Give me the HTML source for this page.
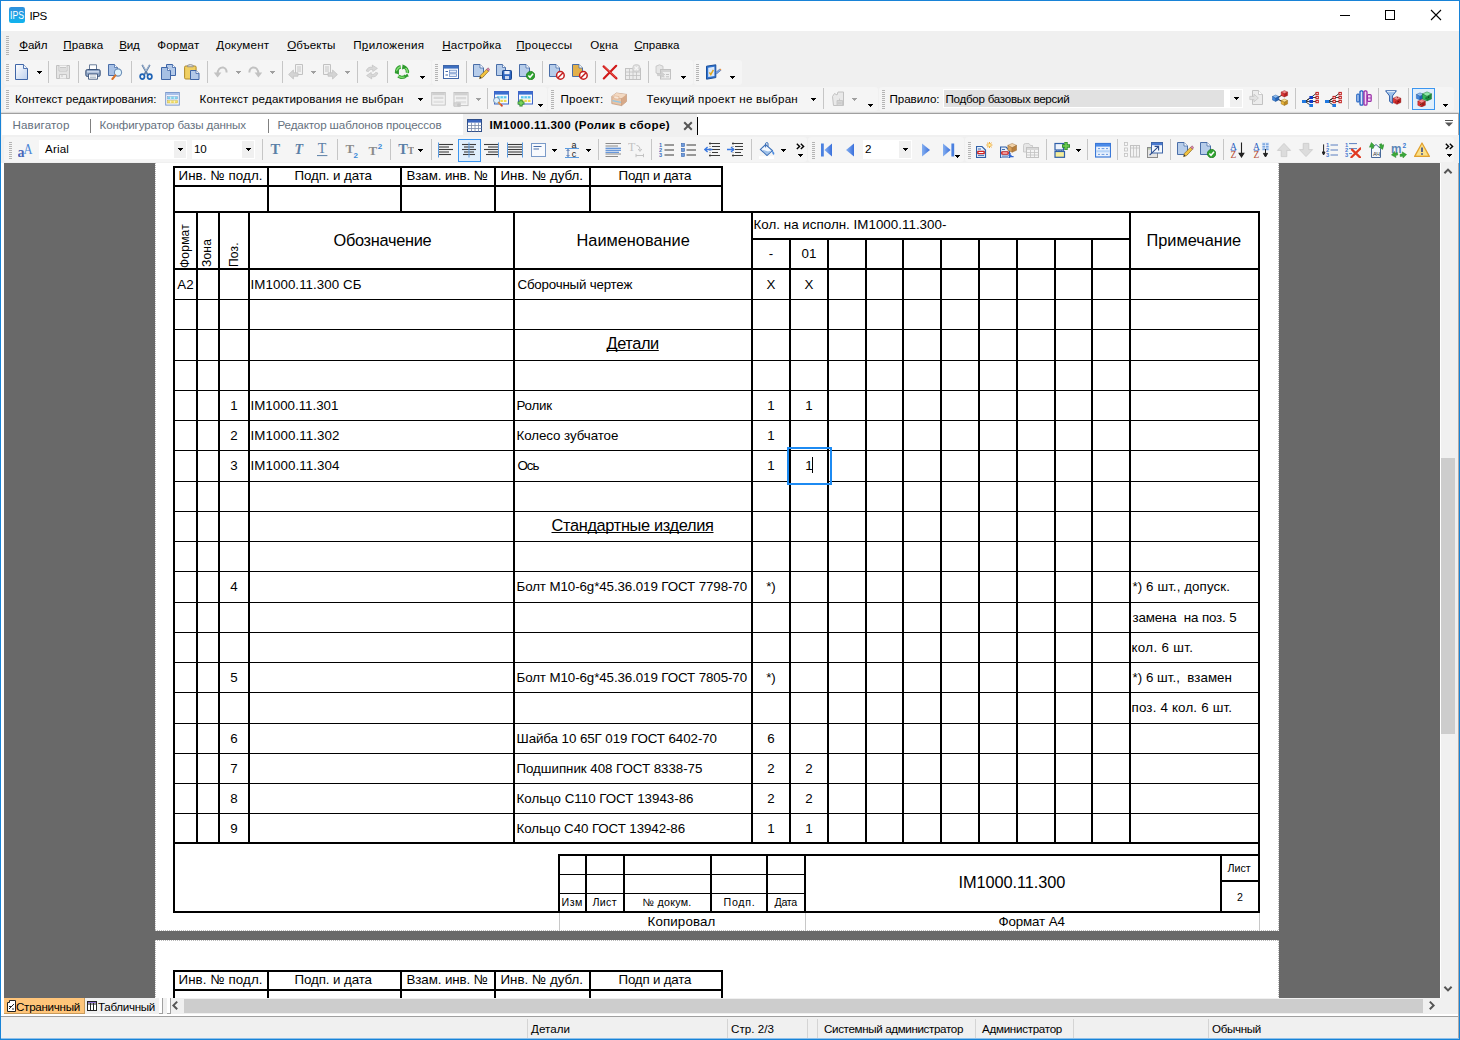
<!DOCTYPE html>
<html><head><meta charset="utf-8"><title>IPS</title><style>
html,body{margin:0;padding:0}
body{width:1460px;height:1040px;position:relative;overflow:hidden;background:#f0f0f0;
font-family:"Liberation Sans",sans-serif;}
#r{position:absolute;left:0;top:0;width:1460px;height:1040px;overflow:hidden}
#r div,#r svg,#r span{position:absolute}
.t{white-space:nowrap;line-height:20px}
</style></head><body><div id="r">
<div style="left:0px;top:0px;width:1460px;height:31px;background:#fff;"></div>
<div style="left:1px;top:163px;width:3px;height:853px;background:#fff;"></div>
<div style="left:4px;top:163px;width:1436px;height:835px;background:#696969;"></div>
<div style="left:155px;top:163px;width:1124px;height:768px;background:#fff;"></div>
<div style="left:155px;top:940px;width:1124px;height:58px;background:#fff;"></div>
<div style="left:155px;top:163px;width:1px;height:768px;background:repeating-linear-gradient(180deg,#b9b9b9 0 1px,#fff 1px 2px);"></div>
<div style="left:1278px;top:163px;width:1px;height:768px;background:repeating-linear-gradient(180deg,#b9b9b9 0 1px,#fff 1px 2px);"></div>
<div style="left:155px;top:930px;width:1124px;height:1px;background:repeating-linear-gradient(90deg,#b9b9b9 0 1px,#fff 1px 2px);"></div>
<div style="left:155px;top:940px;width:1124px;height:1px;background:repeating-linear-gradient(90deg,#b9b9b9 0 1px,#fff 1px 2px);"></div>
<div style="left:155px;top:940px;width:1px;height:58px;background:repeating-linear-gradient(180deg,#b9b9b9 0 1px,#fff 1px 2px);"></div>
<div style="left:1278px;top:940px;width:1px;height:58px;background:repeating-linear-gradient(180deg,#b9b9b9 0 1px,#fff 1px 2px);"></div>
<div style="left:1px;top:112px;width:1458px;height:1px;background:#dadada;"></div>
<div style="left:1px;top:113px;width:1458px;height:1px;background:#a0a0a0;"></div>
<div style="left:2px;top:114px;width:1456px;height:21px;background:#fff;"></div>
<div style="left:1440px;top:163px;width:1px;height:835px;background:#fff;"></div>
<div style="left:1441px;top:163px;width:17px;height:835px;background:#f0f0f0;"></div>
<div style="left:1441px;top:458px;width:14px;height:276px;background:#cdcdcd;"></div>
<svg style="left:1443px;top:167px" width="10" height="8" viewBox="0 0 10 8"><path d="M1.4 6.2 L5 2.6 L8.6 6.2" fill="none" stroke="#555" stroke-width="2"/></svg>
<svg style="left:1443px;top:985px" width="10" height="8" viewBox="0 0 10 8"><path d="M1.4 1.8 L5 5.4 L8.6 1.8" fill="none" stroke="#555" stroke-width="2"/></svg>
<div style="left:4px;top:998px;width:1454px;height:16px;background:#f0f0f0;"></div>
<div style="left:4px;top:1014px;width:1454px;height:2px;background:#fff;"></div>
<div style="left:1px;top:1016px;width:1458px;height:1px;background:#a0a0a0;"></div>
<div style="left:4px;top:998px;width:81px;height:16px;background:#ffc57a;box-shadow:inset -1px -1px 0 #c89b5c"></div>
<svg style="left:7px;top:1000px" width="9" height="12" viewBox="0 0 9 12"><path d="M.5 2.5 H2.5 V.5 H8.5 V11.5 H.5Z" fill="#fff" stroke="#222" stroke-width="1"/><path d="M2 9 L7 4 M2 6.5 H4.5 M5 9 H7" stroke="#222" stroke-width="1" fill="none"/></svg>
<svg style="left:87px;top:1001px" width="10" height="10" viewBox="0 0 10 10"><rect x=".5" y=".5" width="9" height="9" fill="#fff" stroke="#222"/><path d="M.5 3 H9.5 M3.5 .5 V9.5 M6.5 .5 V9.5" stroke="#222" fill="none"/><path d="M1 1.5 H9" stroke="#8a6fd0" stroke-width="1"/></svg>
<span id="t1" class="t" style="left:16px;top:997px;font-size:11.6px;color:#000;letter-spacing:-0.272px;">Страничный</span>
<span id="t2" class="t" style="left:98px;top:997px;font-size:11.6px;color:#000;letter-spacing:-0.292px;">Табличный</span>
<div style="left:159px;top:998px;width:3px;height:16px;background:#fff;"></div>
<div style="left:162px;top:998px;width:1px;height:16px;background:#a0a0a0;"></div>
<div style="left:159px;top:1013px;width:4px;height:1px;background:#a0a0a0;"></div>
<div style="left:167px;top:998px;width:3px;height:16px;background:#fff;"></div>
<div style="left:170px;top:998px;width:1px;height:16px;background:#a0a0a0;"></div>
<div style="left:167px;top:1013px;width:4px;height:1px;background:#a0a0a0;"></div>
<div style="left:184px;top:999px;width:1239px;height:14px;background:#cdcdcd;"></div>
<svg style="left:171px;top:1000px" width="8" height="11" viewBox="0 0 8 11"><path d="M6.2 1.6 L2.4 5.4 L6.2 9.2" fill="none" stroke="#555" stroke-width="2"/></svg>
<svg style="left:1428px;top:1000px" width="8" height="11" viewBox="0 0 8 11"><path d="M1.8 1.6 L5.6 5.4 L1.8 9.2" fill="none" stroke="#555" stroke-width="2"/></svg>
<div style="left:1px;top:1017px;width:1458px;height:22px;background:#f0f0f0;"></div>
<div style="left:527px;top:1019px;width:1px;height:19px;background:#d4d4d4;"></div>
<div style="left:727px;top:1019px;width:1px;height:19px;background:#d4d4d4;"></div>
<div style="left:807px;top:1019px;width:1px;height:19px;background:#d4d4d4;"></div>
<div style="left:817px;top:1019px;width:1px;height:19px;background:#d4d4d4;"></div>
<div style="left:975px;top:1019px;width:1px;height:19px;background:#d4d4d4;"></div>
<div style="left:1073px;top:1019px;width:1px;height:19px;background:#d4d4d4;"></div>
<div style="left:1208px;top:1019px;width:1px;height:19px;background:#d4d4d4;"></div>
<span id="t3" class="t" style="left:531px;top:1019px;font-size:11.6px;color:#000;letter-spacing:0.034px;">Детали</span>
<span id="t4" class="t" style="left:731px;top:1019px;font-size:11.6px;color:#000;letter-spacing:0.037px;">Стр. 2/3</span>
<span id="t5" class="t" style="left:824px;top:1019px;font-size:11.6px;color:#000;letter-spacing:-0.350px;">Системный администратор</span>
<span id="t6" class="t" style="left:982px;top:1019px;font-size:11.6px;color:#000;letter-spacing:-0.281px;">Администратор</span>
<span id="t7" class="t" style="left:1212px;top:1019px;font-size:11.6px;color:#000;letter-spacing:-0.321px;">Обычный</span>
<svg style="left:9px;top:7px" width="16" height="16" viewBox="0 0 16 16"><defs><linearGradient id="ipsg" x1="0" y1="0" x2="0" y2="1"><stop offset="0" stop-color="#2f8fdc"/><stop offset="1" stop-color="#10b4ee"/></linearGradient></defs><rect width="16" height="16" rx="2.2" fill="url(#ipsg)"/><text x="8" y="12" font-family="Liberation Sans" font-size="10.5" fill="#fff" text-anchor="middle" textLength="14" lengthAdjust="spacingAndGlyphs">IPS</text></svg>
<span id="t8" class="t" style="left:29.5px;top:6px;font-size:11.6px;color:#000;letter-spacing:-0.429px;">IPS</span>
<div style="left:1340px;top:15px;width:10px;height:1px;background:#000;"></div>
<div style="left:1385px;top:10px;width:10px;height:10px;background:transparent;box-sizing:border-box;border:1px solid #000"></div>
<svg style="left:1430px;top:9px" width="12" height="12" viewBox="0 0 12 12"><path d="M1 1 L11 11 M11 1 L1 11" stroke="#000" stroke-width="1.1" fill="none"/></svg>
<div style="left:0px;top:0px;width:1460px;height:1px;background:#1883d7;"></div>
<div style="left:0px;top:0px;width:1px;height:1040px;background:#1883d7;"></div>
<div style="left:1459px;top:0px;width:1px;height:1040px;background:#1883d7;"></div>
<div style="left:0px;top:1039px;width:1460px;height:1px;background:#1883d7;"></div>
<div style="left:1458px;top:113px;width:1px;height:926px;background:#b3aaa6;"></div>
<div style="left:1px;top:1038px;width:1458px;height:1px;background:#8fc0ea;"></div>
<div style="left:173px;top:166px;width:550px;height:2px;background:#000;"></div>
<div style="left:173px;top:185px;width:550px;height:2px;background:#000;"></div>
<div style="left:173px;top:211px;width:550px;height:2px;background:#000;"></div>
<div style="left:173px;top:166px;width:2px;height:47px;background:#000;"></div>
<div style="left:267px;top:166px;width:2px;height:47px;background:#000;"></div>
<div style="left:400px;top:166px;width:2px;height:47px;background:#000;"></div>
<div style="left:494px;top:166px;width:2px;height:47px;background:#000;"></div>
<div style="left:589px;top:166px;width:2px;height:47px;background:#000;"></div>
<div style="left:721px;top:166px;width:2px;height:47px;background:#000;"></div>
<span id="t9" class="t" style="left:178.5px;top:166px;font-size:13.33px;color:#000;letter-spacing:0.091px;">Инв. № подл.</span>
<span id="t10" class="t" style="left:294.5px;top:166px;font-size:13.33px;color:#000;letter-spacing:-0.091px;">Подп. и дата</span>
<span id="t11" class="t" style="left:406.5px;top:166px;font-size:13.33px;color:#000;letter-spacing:-0.091px;">Взам. инв. №</span>
<span id="t12" class="t" style="left:500.5px;top:166px;font-size:13.33px;color:#000;">Инв. № дубл.</span>
<span id="t13" class="t" style="left:618.5px;top:166px;font-size:13.33px;color:#000;letter-spacing:-0.200px;">Подп и дата</span>
<div style="left:173px;top:970px;width:550px;height:2px;background:#000;"></div>
<div style="left:173px;top:989px;width:550px;height:2px;background:#000;"></div>
<div style="left:173px;top:970px;width:2px;height:28px;background:#000;"></div>
<div style="left:267px;top:970px;width:2px;height:28px;background:#000;"></div>
<div style="left:400px;top:970px;width:2px;height:28px;background:#000;"></div>
<div style="left:494px;top:970px;width:2px;height:28px;background:#000;"></div>
<div style="left:589px;top:970px;width:2px;height:28px;background:#000;"></div>
<div style="left:721px;top:970px;width:2px;height:28px;background:#000;"></div>
<span id="t14" class="t" style="left:178.5px;top:970px;font-size:13.33px;color:#000;letter-spacing:0.091px;">Инв. № подл.</span>
<span id="t15" class="t" style="left:294.5px;top:970px;font-size:13.33px;color:#000;letter-spacing:-0.091px;">Подп. и дата</span>
<span id="t16" class="t" style="left:406.5px;top:970px;font-size:13.33px;color:#000;letter-spacing:-0.091px;">Взам. инв. №</span>
<span id="t17" class="t" style="left:500.5px;top:970px;font-size:13.33px;color:#000;">Инв. № дубл.</span>
<span id="t18" class="t" style="left:618.5px;top:970px;font-size:13.33px;color:#000;letter-spacing:-0.200px;">Подп и дата</span>
<div style="left:173px;top:211px;width:1087px;height:2px;background:#000;"></div>
<div style="left:173px;top:268px;width:1087px;height:2px;background:#000;"></div>
<div style="left:173px;top:842px;width:1087px;height:2px;background:#000;"></div>
<div style="left:751px;top:238px;width:380px;height:2px;background:#000;"></div>
<div style="left:173px;top:299px;width:1087px;height:1px;background:#000;"></div>
<div style="left:173px;top:329px;width:1087px;height:1px;background:#000;"></div>
<div style="left:173px;top:360px;width:1087px;height:1px;background:#000;"></div>
<div style="left:173px;top:390px;width:1087px;height:1px;background:#000;"></div>
<div style="left:173px;top:420px;width:1087px;height:1px;background:#000;"></div>
<div style="left:173px;top:450px;width:1087px;height:1px;background:#000;"></div>
<div style="left:173px;top:481px;width:1087px;height:1px;background:#000;"></div>
<div style="left:173px;top:511px;width:1087px;height:1px;background:#000;"></div>
<div style="left:173px;top:541px;width:1087px;height:1px;background:#000;"></div>
<div style="left:173px;top:571px;width:1087px;height:1px;background:#000;"></div>
<div style="left:173px;top:602px;width:1087px;height:1px;background:#000;"></div>
<div style="left:173px;top:632px;width:1087px;height:1px;background:#000;"></div>
<div style="left:173px;top:662px;width:1087px;height:1px;background:#000;"></div>
<div style="left:173px;top:692px;width:1087px;height:1px;background:#000;"></div>
<div style="left:173px;top:723px;width:1087px;height:1px;background:#000;"></div>
<div style="left:173px;top:753px;width:1087px;height:1px;background:#000;"></div>
<div style="left:173px;top:783px;width:1087px;height:1px;background:#000;"></div>
<div style="left:173px;top:813px;width:1087px;height:1px;background:#000;"></div>
<div style="left:173px;top:211px;width:2px;height:633px;background:#000;"></div>
<div style="left:196px;top:211px;width:2px;height:633px;background:#000;"></div>
<div style="left:218px;top:211px;width:2px;height:633px;background:#000;"></div>
<div style="left:248px;top:211px;width:2px;height:633px;background:#000;"></div>
<div style="left:513px;top:211px;width:2px;height:633px;background:#000;"></div>
<div style="left:751px;top:211px;width:2px;height:633px;background:#000;"></div>
<div style="left:1129px;top:211px;width:2px;height:633px;background:#000;"></div>
<div style="left:1258px;top:211px;width:2px;height:633px;background:#000;"></div>
<div style="left:789px;top:238px;width:2px;height:606px;background:#000;"></div>
<div style="left:827px;top:238px;width:2px;height:606px;background:#000;"></div>
<div style="left:865px;top:238px;width:2px;height:606px;background:#000;"></div>
<div style="left:902px;top:238px;width:2px;height:606px;background:#000;"></div>
<div style="left:940px;top:238px;width:2px;height:606px;background:#000;"></div>
<div style="left:978px;top:238px;width:2px;height:606px;background:#000;"></div>
<div style="left:1016px;top:238px;width:2px;height:606px;background:#000;"></div>
<div style="left:1054px;top:238px;width:2px;height:606px;background:#000;"></div>
<div style="left:1091px;top:238px;width:2px;height:606px;background:#000;"></div>
<div style="left:173px;top:842px;width:2px;height:71px;background:#000;"></div>
<div style="left:1258px;top:842px;width:2px;height:71px;background:#000;"></div>
<div style="left:173px;top:911px;width:1087px;height:2px;background:#000;"></div>
<div style="left:558px;top:854px;width:702px;height:2px;background:#000;"></div>
<div style="left:558px;top:854px;width:2px;height:59px;background:#000;"></div>
<div style="left:585px;top:854px;width:2px;height:59px;background:#000;"></div>
<div style="left:623px;top:854px;width:2px;height:59px;background:#000;"></div>
<div style="left:710px;top:854px;width:2px;height:59px;background:#000;"></div>
<div style="left:766px;top:854px;width:2px;height:59px;background:#000;"></div>
<div style="left:804px;top:854px;width:2px;height:59px;background:#000;"></div>
<div style="left:1220px;top:854px;width:2px;height:59px;background:#000;"></div>
<div style="left:560px;top:874px;width:245px;height:1px;background:#000;"></div>
<div style="left:560px;top:893px;width:245px;height:1px;background:#000;"></div>
<div style="left:1220px;top:880px;width:40px;height:2px;background:#000;"></div>
<div style="left:559px;top:913px;width:1px;height:17px;background:#c8c8c8;"></div>
<div style="left:805px;top:913px;width:1px;height:17px;background:#c8c8c8;"></div>
<div style="left:1259px;top:913px;width:1px;height:17px;background:#c8c8c8;"></div>
<span id="t19" class="t" style="left:333.5px;top:230px;font-size:16.35px;color:#000;letter-spacing:-0.300px;">Обозначение</span>
<span id="t20" class="t" style="left:576.5px;top:230px;font-size:16.35px;color:#000;">Наименование</span>
<span id="t21" class="t" style="left:1146.5px;top:230px;font-size:16.35px;color:#000;">Примечание</span>
<span id="t22" class="t" style="left:753.5px;top:215px;font-size:13.33px;color:#000;letter-spacing:0.034px;">Кол. на исполн. IM1000.11.300-</span>
<span id="t23" class="t" style="left:753px;top:244px;font-size:13.33px;color:#000;width:36px;text-align:center;">-</span>
<span id="t24" class="t" style="left:791px;top:244px;font-size:13.33px;color:#000;width:36px;text-align:center;">01</span>
<span class="t" style="left:184.5px;top:268px;font-size:12px;line-height:12px;transform-origin:0 0;transform:rotate(-90deg) translateY(-6.5px);color:#000;letter-spacing:.22px">Формат</span>
<span class="t" style="left:207px;top:267px;font-size:12px;line-height:12px;transform-origin:0 0;transform:rotate(-90deg) translateY(-6.5px);color:#000;letter-spacing:.22px">Зона</span>
<span class="t" style="left:233.5px;top:266.5px;font-size:12px;line-height:12px;transform-origin:0 0;transform:rotate(-90deg) translateY(-6.5px);color:#000;letter-spacing:.22px">Поз.</span>
<span id="t25" class="t" style="left:175px;top:275px;font-size:13.33px;color:#000;width:21px;text-align:center;">А2</span>
<span id="t26" class="t" style="left:250.5px;top:275px;font-size:13.33px;color:#000;letter-spacing:0.067px;">IM1000.11.300 СБ</span>
<span id="t27" class="t" style="left:517.5px;top:275px;font-size:13.33px;color:#000;letter-spacing:-0.200px;">Сборочный чертеж</span>
<span id="t28" class="t" style="left:753px;top:275px;font-size:13.33px;color:#000;width:36px;text-align:center;">Х</span>
<span id="t29" class="t" style="left:791px;top:275px;font-size:13.33px;color:#000;width:36px;text-align:center;">Х</span>
<span id="t30" class="t" style="left:606.5px;top:333px;font-size:16.35px;color:#000;text-decoration:underline;text-decoration-skip-ink:none;letter-spacing:-0.400px;">Детали</span>
<span id="t31" class="t" style="left:220px;top:396px;font-size:13.33px;color:#000;width:28px;text-align:center;">1</span>
<span id="t32" class="t" style="left:250.5px;top:396px;font-size:13.33px;color:#000;">IM1000.11.301</span>
<span id="t33" class="t" style="left:516.5px;top:396px;font-size:13.33px;color:#000;letter-spacing:-0.250px;">Ролик</span>
<span id="t34" class="t" style="left:753px;top:396px;font-size:13.33px;color:#000;width:36px;text-align:center;">1</span>
<span id="t35" class="t" style="left:791px;top:396px;font-size:13.33px;color:#000;width:36px;text-align:center;">1</span>
<span id="t36" class="t" style="left:220px;top:426px;font-size:13.33px;color:#000;width:28px;text-align:center;">2</span>
<span id="t37" class="t" style="left:250.5px;top:426px;font-size:13.33px;color:#000;letter-spacing:0.083px;">IM1000.11.302</span>
<span id="t38" class="t" style="left:516.5px;top:426px;font-size:13.33px;color:#000;letter-spacing:-0.071px;">Колесо зубчатое</span>
<span id="t39" class="t" style="left:753px;top:426px;font-size:13.33px;color:#000;width:36px;text-align:center;">1</span>
<span id="t40" class="t" style="left:220px;top:456px;font-size:13.33px;color:#000;width:28px;text-align:center;">3</span>
<span id="t41" class="t" style="left:250.5px;top:456px;font-size:13.33px;color:#000;letter-spacing:0.083px;">IM1000.11.304</span>
<span id="t42" class="t" style="left:517.5px;top:456px;font-size:13.33px;color:#000;letter-spacing:-1.000px;">Ось</span>
<span id="t43" class="t" style="left:753px;top:456px;font-size:13.33px;color:#000;width:36px;text-align:center;">1</span>
<span id="t44" class="t" style="left:791px;top:456px;font-size:13.33px;color:#000;width:36px;text-align:center;">1</span>
<span id="t45" class="t" style="left:551.5px;top:515px;font-size:16.35px;color:#000;text-decoration:underline;text-decoration-skip-ink:none;letter-spacing:-0.333px;">Стандартные изделия</span>
<span id="t46" class="t" style="left:220px;top:577px;font-size:13.33px;color:#000;width:28px;text-align:center;">4</span>
<span id="t47" class="t" style="left:516.5px;top:577px;font-size:13.33px;color:#000;letter-spacing:-0.091px;">Болт М10-6g*45.36.019 ГОСТ 7798-70</span>
<span id="t48" class="t" style="left:753px;top:577px;font-size:13.33px;color:#000;width:36px;text-align:center;">*)</span>
<span id="t49" class="t" style="left:1132.5px;top:577px;font-size:13.33px;color:#000;letter-spacing:0.087px;">*) 6 шт., допуск.</span>
<span id="t50" class="t" style="left:1132.5px;top:608px;font-size:13.33px;color:#000;letter-spacing:-0.125px;">замена  на поз. 5</span>
<span id="t51" class="t" style="left:1131.5px;top:638px;font-size:13.33px;color:#000;letter-spacing:0.333px;">кол. 6 шт.</span>
<span id="t52" class="t" style="left:220px;top:668px;font-size:13.33px;color:#000;width:28px;text-align:center;">5</span>
<span id="t53" class="t" style="left:516.5px;top:668px;font-size:13.33px;color:#000;letter-spacing:-0.091px;">Болт М10-6g*45.36.019 ГОСТ 7805-70</span>
<span id="t54" class="t" style="left:753px;top:668px;font-size:13.33px;color:#000;width:36px;text-align:center;">*)</span>
<span id="t55" class="t" style="left:1132.5px;top:668px;font-size:13.33px;color:#000;letter-spacing:0.025px;">*) 6 шт.,  взамен</span>
<span id="t56" class="t" style="left:1131.5px;top:698px;font-size:13.33px;color:#000;letter-spacing:0.188px;">поз. 4 кол. 6 шт.</span>
<span id="t57" class="t" style="left:220px;top:729px;font-size:13.33px;color:#000;width:28px;text-align:center;">6</span>
<span id="t58" class="t" style="left:516.5px;top:729px;font-size:13.33px;color:#000;letter-spacing:-0.071px;">Шайба 10 65Г 019 ГОСТ 6402-70</span>
<span id="t59" class="t" style="left:753px;top:729px;font-size:13.33px;color:#000;width:36px;text-align:center;">6</span>
<span id="t60" class="t" style="left:220px;top:759px;font-size:13.33px;color:#000;width:28px;text-align:center;">7</span>
<span id="t61" class="t" style="left:516.5px;top:759px;font-size:13.33px;color:#000;letter-spacing:-0.040px;">Подшипник 408 ГОСТ 8338-75</span>
<span id="t62" class="t" style="left:753px;top:759px;font-size:13.33px;color:#000;width:36px;text-align:center;">2</span>
<span id="t63" class="t" style="left:791px;top:759px;font-size:13.33px;color:#000;width:36px;text-align:center;">2</span>
<span id="t64" class="t" style="left:220px;top:789px;font-size:13.33px;color:#000;width:28px;text-align:center;">8</span>
<span id="t65" class="t" style="left:516.5px;top:789px;font-size:13.33px;color:#000;">Кольцо С110 ГОСТ 13943-86</span>
<span id="t66" class="t" style="left:753px;top:789px;font-size:13.33px;color:#000;width:36px;text-align:center;">2</span>
<span id="t67" class="t" style="left:791px;top:789px;font-size:13.33px;color:#000;width:36px;text-align:center;">2</span>
<span id="t68" class="t" style="left:220px;top:819px;font-size:13.33px;color:#000;width:28px;text-align:center;">9</span>
<span id="t69" class="t" style="left:516.5px;top:819px;font-size:13.33px;color:#000;letter-spacing:-0.087px;">Кольцо С40 ГОСТ 13942-86</span>
<span id="t70" class="t" style="left:753px;top:819px;font-size:13.33px;color:#000;width:36px;text-align:center;">1</span>
<span id="t71" class="t" style="left:791px;top:819px;font-size:13.33px;color:#000;width:36px;text-align:center;">1</span>
<div style="left:791px;top:451px;width:36px;height:32px;background:#fff;"></div>
<div style="left:787px;top:447px;width:45px;height:38px;background:transparent;box-sizing:border-box;border:2px solid #1c8af2"></div>
<div style="left:812px;top:457px;width:1px;height:16px;background:#000;"></div>
<span id="t72" class="t" style="left:791px;top:456px;font-size:13.33px;color:#000;width:36px;text-align:center;">1</span>
<span id="t73" class="t" style="left:561.5px;top:892px;font-size:10.67px;color:#000;letter-spacing:0.500px;">Изм</span>
<span id="t74" class="t" style="left:592.5px;top:892px;font-size:10.67px;color:#000;letter-spacing:0.333px;">Лист</span>
<span id="t75" class="t" style="left:642.5px;top:892px;font-size:10.67px;color:#000;letter-spacing:0.286px;">№ докум.</span>
<span id="t76" class="t" style="left:723.5px;top:892px;font-size:10.67px;color:#000;letter-spacing:0.750px;">Подп.</span>
<span id="t77" class="t" style="left:774.5px;top:892px;font-size:10.67px;color:#000;letter-spacing:-0.333px;">Дата</span>
<span id="t78" class="t" style="left:1227.5px;top:858px;font-size:10.67px;color:#000;">Лист</span>
<span id="t79" class="t" style="left:1222px;top:887px;font-size:10.67px;color:#000;width:36px;text-align:center;">2</span>
<span id="t80" class="t" style="left:958.5px;top:872px;font-size:16.35px;color:#000;letter-spacing:-0.083px;">IM1000.11.300</span>
<span id="t81" class="t" style="left:647.5px;top:912px;font-size:13.33px;color:#000;letter-spacing:0.125px;">Копировал</span>
<span id="t82" class="t" style="left:998.5px;top:912px;font-size:13.33px;color:#000;letter-spacing:-0.125px;">Формат А4</span>
<div style="left:4px;top:60px;width:427px;height:25px;background:#f5f5f5;border-radius:3px"></div>
<div style="left:432px;top:60px;width:261px;height:25px;background:#f5f5f5;border-radius:3px"></div>
<div style="left:694px;top:60px;width:48px;height:25px;background:#f5f5f5;border-radius:3px"></div>
<div style="left:4px;top:87px;width:543px;height:24px;background:#f5f5f5;border-radius:3px"></div>
<div style="left:548px;top:87px;width:330px;height:24px;background:#f5f5f5;border-radius:3px"></div>
<div style="left:879px;top:87px;width:575px;height:24px;background:#f5f5f5;border-radius:3px"></div>
<div style="left:4px;top:137px;width:803px;height:25px;background:#f5f5f5;border-radius:3px"></div>
<div style="left:808px;top:137px;width:156px;height:25px;background:#f5f5f5;border-radius:3px"></div>
<div style="left:965px;top:137px;width:489px;height:25px;background:#f5f5f5;border-radius:3px"></div>
<div style="left:6px;top:36px;width:3px;height:20px;background:repeating-linear-gradient(180deg,#b4b4b4 0 1px,transparent 1px 2px);"></div>
<span id="t83" class="t" style="left:19.2px;top:35px;font-size:11.6px;color:#000;letter-spacing:-0.083px;"><span style="position:static;text-decoration:underline;text-underline-offset:.8px;text-decoration-thickness:1px">Ф</span>айл</span>
<span id="t84" class="t" style="left:63.2px;top:35px;font-size:11.6px;color:#000;letter-spacing:0.169px;"><span style="position:static;text-decoration:underline;text-underline-offset:.8px;text-decoration-thickness:1px">П</span>равка</span>
<span id="t85" class="t" style="left:119.2px;top:35px;font-size:11.6px;color:#000;letter-spacing:-0.261px;"><span style="position:static;text-decoration:underline;text-underline-offset:.8px;text-decoration-thickness:1px">В</span>ид</span>
<span id="t86" class="t" style="left:157.2px;top:35px;font-size:11.6px;color:#000;letter-spacing:0.164px;">Фор<span style="position:static;text-decoration:underline;text-underline-offset:.8px;text-decoration-thickness:1px">м</span>ат</span>
<span id="t87" class="t" style="left:216.2px;top:35px;font-size:11.6px;color:#000;letter-spacing:0.220px;"><span style="position:static;text-decoration:underline;text-underline-offset:.8px;text-decoration-thickness:1px">Д</span>окумент</span>
<span id="t88" class="t" style="left:287.2px;top:35px;font-size:11.6px;color:#000;letter-spacing:0.053px;"><span style="position:static;text-decoration:underline;text-underline-offset:.8px;text-decoration-thickness:1px">О</span>бъекты</span>
<span id="t89" class="t" style="left:353.2px;top:35px;font-size:11.6px;color:#000;letter-spacing:0.334px;">П<span style="position:static;text-decoration:underline;text-underline-offset:.8px;text-decoration-thickness:1px">р</span>иложения</span>
<span id="t90" class="t" style="left:442.2px;top:35px;font-size:11.6px;color:#000;letter-spacing:0.236px;"><span style="position:static;text-decoration:underline;text-underline-offset:.8px;text-decoration-thickness:1px">Н</span>астройка</span>
<span id="t91" class="t" style="left:516.2px;top:35px;font-size:11.6px;color:#000;letter-spacing:0.259px;"><span style="position:static;text-decoration:underline;text-underline-offset:.8px;text-decoration-thickness:1px">П</span>роцессы</span>
<span id="t92" class="t" style="left:590.2px;top:35px;font-size:11.6px;color:#000;letter-spacing:0.308px;">О<span style="position:static;text-decoration:underline;text-underline-offset:.8px;text-decoration-thickness:1px">к</span>на</span>
<span id="t93" class="t" style="left:634.2px;top:35px;font-size:11.6px;color:#000;letter-spacing:-0.041px;"><span style="position:static;text-decoration:underline;text-underline-offset:.8px;text-decoration-thickness:1px">С</span>правка</span>
<div style="left:6px;top:64px;width:3px;height:18px;background:repeating-linear-gradient(180deg,#b4b4b4 0 1px,transparent 1px 2px);"></div>
<svg style="left:14px;top:64px" width="16" height="16" viewBox="0 0 16 16"><defs><linearGradient id="gn" x1="0" y1="0" x2="1" y2="1"><stop offset="0" stop-color="#fff"/><stop offset="1" stop-color="#bcd0ee"/></linearGradient></defs><path d="M1.5 .5 H9.5 L13.5 4.5 V15.5 H1.5Z" fill="url(#gn)" stroke="#3f66a8"/><path d="M9.5 .5 V4.5 H13.5" fill="#eef3fb" stroke="#3f66a8" stroke-width=".9"/></svg>
<svg style="left:37px;top:71px" width="5" height="3" viewBox="0 0 5 3"><g fill="#000" shape-rendering="crispEdges"><rect width="5" height="1"/><rect x="1" y="1" width="3" height="1"/><rect x="2" y="2" width="1" height="1"/></g></svg>
<div style="left:48px;top:61px;width:1px;height:22px;background:#c6c6c6;"></div>
<svg style="left:55px;top:64px" width="16" height="16" viewBox="0 0 16 16"><path d="M1.5 1.5 H14.5 V14.5 H1.5Z" fill="#e4e4e4" stroke="#c2c2c2"/><path d="M4 1.5 V7 H12 V1.5 M5 3.5 H11 M5 5 H11" fill="#f3f3f3" stroke="#c2c2c2" stroke-width=".9"/><path d="M4.5 14.5 V10.5 H11.5 V14.5 M6 12 H8" fill="#efefef" stroke="#c2c2c2" stroke-width=".9"/></svg>
<div style="left:78px;top:61px;width:1px;height:22px;background:#c6c6c6;"></div>
<svg style="left:85px;top:64px" width="16" height="16" viewBox="0 0 16 16"><path d="M4.5 6 V.8 H11.5 V6" fill="#fff" stroke="#5a6f90" stroke-width=".9"/><rect x=".8" y="5.5" width="14.4" height="7" rx="1.6" fill="#8ea4c4" stroke="#3e567c"/><rect x="2" y="7" width="12" height="1.6" fill="#c9d6ea"/><path d="M3.5 10 H12.5 V15.2 H3.5Z" fill="#fff" stroke="#3e567c" stroke-width=".9"/><path d="M5 12 H11 M5 13.5 H11" stroke="#9ab" stroke-width=".7"/></svg>
<svg style="left:108px;top:64px" width="16" height="16" viewBox="0 0 16 16"><path d="M0.5 0.5 H6.5 L9.5 3.5 V11.5 H0.5Z" fill="#a9c2e6" stroke="#4a6ea8"/><path d="M6.5 0.5 V3.5 H9.5" fill="#fff" stroke="#4a6ea8" stroke-width=".8"/><circle cx="10" cy="8.5" r="3.6" fill="#dff3fb" stroke="#6d8fb8" stroke-width="1.1"/><path d="M7.4 11.4 L4.4 15" stroke="#d8742a" stroke-width="2" stroke-linecap="round"/></svg>
<div style="left:131px;top:61px;width:1px;height:22px;background:#c6c6c6;"></div>
<svg style="left:138px;top:64px" width="16" height="16" viewBox="0 0 16 16"><path d="M4.2 .8 L9.6 10.5 M11.8 .8 L6.4 10.5" stroke="#5f7fa8" stroke-width="1.7" fill="none"/><path d="M4.6 .8 L8 7 L11.4 .8" fill="none" stroke="#b7c7dc" stroke-width=".8"/><ellipse cx="4.3" cy="12.6" rx="2.2" ry="2.5" fill="none" stroke="#1f63b5" stroke-width="1.7"/><ellipse cx="11.7" cy="12.6" rx="2.2" ry="2.5" fill="none" stroke="#1f63b5" stroke-width="1.7"/></svg>
<svg style="left:161px;top:64px" width="16" height="16" viewBox="0 0 16 16"><path d="M5.5 0.5 H11.5 L14.5 3.5 V11.5 H5.5Z" fill="#b3c9e8" stroke="#3f66a8"/><path d="M11.5 0.5 V3.5 H14.5" fill="#fff" stroke="#3f66a8" stroke-width=".8"/><path d="M0.5 3.5 H6.5 L9.5 6.5 V15.5 H0.5Z" fill="#a6c0e4" stroke="#3f66a8"/><path d="M6.5 3.5 V6.5 H9.5" fill="#fff" stroke="#3f66a8" stroke-width=".8"/></svg>
<svg style="left:184px;top:64px" width="16" height="16" viewBox="0 0 16 16"><rect x=".6" y="2" width="11.5" height="13" rx="1.2" fill="#f0cf62" stroke="#b08a28"/><path d="M3.5 2.8 V1.4 Q6.3 -.6 9.2 1.4 V2.8Z" fill="#d9d9d9" stroke="#8a8a8a" stroke-width=".8"/><path d="M6.5 6.5 H12.0 L15.0 9.5 V15.5 H6.5Z" fill="#b3c9e8" stroke="#3f66a8"/><path d="M12.0 6.5 V9.5 H15.0" fill="#fff" stroke="#3f66a8" stroke-width=".8"/></svg>
<div style="left:207px;top:61px;width:1px;height:22px;background:#c6c6c6;"></div>
<svg style="left:213px;top:64px" width="16" height="16" viewBox="0 0 16 16"><path d="M4.5 10 Q5 3 10.5 3.6 Q13.6 4.4 13.6 8.4" fill="none" stroke="#c2c2c2" stroke-width="2"/><path d="M.8 8.4 H8.4 L4.6 13.4Z" fill="#c2c2c2"/></svg>
<svg style="left:236px;top:71px" width="5" height="3" viewBox="0 0 5 3"><g fill="#a0a0a0" shape-rendering="crispEdges"><rect width="5" height="1"/><rect x="1" y="1" width="3" height="1"/><rect x="2" y="2" width="1" height="1"/></g></svg>
<svg style="left:247px;top:64px" width="16" height="16" viewBox="0 0 16 16"><path d="M11.5 10 Q11 3 5.5 3.6 Q2.4 4.4 2.4 8.4" fill="none" stroke="#c2c2c2" stroke-width="2"/><path d="M15.2 8.4 H7.6 L11.4 13.4Z" fill="#c2c2c2"/></svg>
<svg style="left:270px;top:71px" width="5" height="3" viewBox="0 0 5 3"><g fill="#a0a0a0" shape-rendering="crispEdges"><rect width="5" height="1"/><rect x="1" y="1" width="3" height="1"/><rect x="2" y="2" width="1" height="1"/></g></svg>
<div style="left:282px;top:61px;width:1px;height:22px;background:#c6c6c6;"></div>
<svg style="left:288px;top:64px" width="16" height="16" viewBox="0 0 16 16"><path d="M7.5 .5 H14.5 V10.5 H7.5Z" fill="#f2f2f2" stroke="#c2c2c2"/><path d="M9 3 H13 M9 5 H13 M9 7 H13" stroke="#c2c2c2" stroke-width=".9"/><path d="M.6 10.5 L5.4 6 V8.8 H10 V12.2 H5.4 V15Z" fill="#d4d4d4" stroke="#c2c2c2" stroke-width=".8"/></svg>
<svg style="left:311px;top:71px" width="5" height="3" viewBox="0 0 5 3"><g fill="#a0a0a0" shape-rendering="crispEdges"><rect width="5" height="1"/><rect x="1" y="1" width="3" height="1"/><rect x="2" y="2" width="1" height="1"/></g></svg>
<svg style="left:322px;top:64px" width="16" height="16" viewBox="0 0 16 16"><path d="M1.5 .5 H8.5 V10.5 H1.5Z" fill="#f2f2f2" stroke="#c2c2c2"/><path d="M3 3 H7 M3 5 H7 M3 7 H7" stroke="#c2c2c2" stroke-width=".9"/><path d="M15.4 10.5 L10.6 6 V8.8 H6 V12.2 H10.6 V15Z" fill="#d4d4d4" stroke="#c2c2c2" stroke-width=".8"/></svg>
<svg style="left:345px;top:71px" width="5" height="3" viewBox="0 0 5 3"><g fill="#a0a0a0" shape-rendering="crispEdges"><rect width="5" height="1"/><rect x="1" y="1" width="3" height="1"/><rect x="2" y="2" width="1" height="1"/></g></svg>
<div style="left:357px;top:61px;width:1px;height:22px;background:#c6c6c6;"></div>
<svg style="left:364px;top:64px" width="16" height="16" viewBox="0 0 16 16"><path d="M2.2 7 Q3.6 2.4 8.6 3.2 L8.2 1 L13.4 4.4 L8.8 7.6 L8.6 5.4 Q5.4 5 4.4 7.6Z" fill="#d8d8d8" stroke="#c2c2c2" stroke-width=".7"/><path d="M13.8 9 Q12.4 13.6 7.4 12.8 L7.8 15 L2.6 11.6 L7.2 8.4 L7.4 10.6 Q10.6 11 11.6 8.4Z" fill="#d8d8d8" stroke="#c2c2c2" stroke-width=".7"/></svg>
<div style="left:387px;top:61px;width:1px;height:22px;background:#c6c6c6;"></div>
<svg style="left:394px;top:64px" width="16" height="16" viewBox="0 0 16 16"><g fill="none" stroke-linecap="butt"><circle cx="8" cy="8" r="5.4" stroke="#2f9a2f" stroke-width="3.4" stroke-dasharray="8.2 3.1" transform="rotate(-80 8 8)"/><circle cx="8" cy="8" r="5.4" stroke="#7fdc6f" stroke-width="1.5" stroke-dasharray="8.2 3.1" transform="rotate(-80 8 8)"/></g><path d="M8.6 .2 L13 3.6 L8 5.6Z M14.8 12.6 L9.4 13.6 L13.2 9.4Z M.6 8.6 L4.8 5.4 L5 10.8Z" fill="#2f9a2f"/></svg>
<svg style="left:420px;top:76px" width="5" height="3" viewBox="0 0 5 3"><g fill="#000" shape-rendering="crispEdges"><rect width="5" height="1"/><rect x="1" y="1" width="3" height="1"/><rect x="2" y="2" width="1" height="1"/></g></svg>
<div style="left:435px;top:64px;width:3px;height:18px;background:repeating-linear-gradient(180deg,#b4b4b4 0 1px,transparent 1px 2px);"></div>
<svg style="left:443px;top:64px" width="16" height="16" viewBox="0 0 16 16"><rect x=".5" y="1.5" width="15" height="13" fill="#fff" stroke="#3f66a8"/><rect x="1" y="2" width="14" height="2.6" fill="#3d6fc0"/><path d="M2.5 7.5 H5 M2.5 11 H5" stroke="#3f66a8"/><rect x="6.5" y="6.2" width="7" height="2.6" fill="#e9effa" stroke="#6d8fc8" stroke-width=".8"/><rect x="6.5" y="9.8" width="7" height="2.6" fill="#e9effa" stroke="#6d8fc8" stroke-width=".8"/></svg>
<div style="left:466px;top:61px;width:1px;height:22px;background:#c6c6c6;"></div>
<svg style="left:473px;top:64px" width="17" height="16" viewBox="0 0 17 16"><path d="M0.5 0.5 H7.0 L10.5 4.0 V12.5 H0.5Z" fill="#b7cdea" stroke="#4a6ea8"/><path d="M7.0 0.5 V4.0 H10.5" fill="#fff" stroke="#4a6ea8" stroke-width=".8"/><path d="M6.6 14.6 L7.4 11.4 L13.6 5.2 L15.6 7.2 L9.6 13.6Z" fill="#f2c23e" stroke="#8a6a22" stroke-width=".7"/><path d="M13.6 5.2 L14.6 4.2 Q15.4 3.8 16 4.6 L16.4 5.6 L15.6 7.2Z" fill="#e58fb4" stroke="#8a4a66" stroke-width=".6"/><path d="M6.6 14.6 L7.2 12.6 L8.6 14Z" fill="#333"/></svg>
<svg style="left:496px;top:64px" width="16" height="16" viewBox="0 0 16 16"><path d="M0.5 0.5 H6.5 L9.5 3.5 V11.5 H0.5Z" fill="#b7cdea" stroke="#4a6ea8"/><path d="M6.5 0.5 V3.5 H9.5" fill="#fff" stroke="#4a6ea8" stroke-width=".8"/><rect x="6.5" y="6.5" width="9" height="9" rx=".8" fill="#2f66c0" stroke="#1c478e"/><rect x="8.4" y="7" width="5.2" height="3.2" fill="#e8eefb"/><rect x="9" y="12" width="4" height="3.2" fill="#cbd7ee"/></svg>
<svg style="left:519px;top:64px" width="16" height="16" viewBox="0 0 16 16"><path d="M0.5 0.5 H7.0 L10.5 4.0 V12.5 H0.5Z" fill="#b7cdea" stroke="#4a6ea8"/><path d="M7.0 0.5 V4.0 H10.5" fill="#fff" stroke="#4a6ea8" stroke-width=".8"/><circle cx="11.6" cy="11.6" r="4.2" fill="#2fa32f" stroke="#1c7a1c" stroke-width=".8"/><path d="M9.4 11.6 L11 13.3 L14 9.8" fill="none" stroke="#fff" stroke-width="1.5"/></svg>
<div style="left:542px;top:61px;width:1px;height:22px;background:#c6c6c6;"></div>
<svg style="left:549px;top:64px" width="16" height="16" viewBox="0 0 16 16"><path d="M0.5 0.5 H7.0 L10.5 4.0 V12.5 H0.5Z" fill="#b7cdea" stroke="#4a6ea8"/><path d="M7.0 0.5 V4.0 H10.5" fill="#fff" stroke="#4a6ea8" stroke-width=".8"/><circle cx="11.4" cy="11.4" r="3.8" fill="#fff" stroke="#c41e1e" stroke-width="1.5"/><path d="M8.8 14 L14 8.8" stroke="#c41e1e" stroke-width="1.5"/></svg>
<svg style="left:572px;top:64px" width="16" height="16" viewBox="0 0 16 16"><path d="M0.5 0.5 H7.0 L10.5 4.0 V12.5 H0.5Z" fill="#e2b04a" stroke="#4a6ea8"/><path d="M7.0 0.5 V4.0 H10.5" fill="#fff" stroke="#4a6ea8" stroke-width=".8"/><circle cx="11.4" cy="11.4" r="3.8" fill="#fff" stroke="#c41e1e" stroke-width="1.5"/><path d="M8.8 14 L14 8.8" stroke="#c41e1e" stroke-width="1.5"/></svg>
<div style="left:595px;top:61px;width:1px;height:22px;background:#c6c6c6;"></div>
<svg style="left:602px;top:64px" width="16" height="16" viewBox="0 0 16 16"><path d="M1.6 2.4 L14.4 14.4 M14.2 1.8 L1.8 14.4" stroke="#d11a1a" stroke-width="2.2" stroke-linecap="round"/><path d="M2.2 2.6 L14 13.6" stroke="#f36a5a" stroke-width=".7"/></svg>
<svg style="left:625px;top:64px" width="16" height="16" viewBox="0 0 16 16"><rect x=".5" y="4.5" width="15" height="11" fill="#ececec" stroke="#c2c2c2"/><path d="M.5 8 H15.5 M.5 11.5 H15.5 M4.5 4.5 V15.5 M8 4.5 V15.5 M11.5 4.5 V15.5" stroke="#c2c2c2" stroke-width=".8"/><circle cx="11.4" cy="4.2" r="3.8" fill="#dcdcdc" stroke="#c2c2c2" stroke-width=".6"/><path d="M9.6 2.4 L13.2 6 M13.2 2.4 L9.6 6" stroke="#f6f6f6" stroke-width="1.3"/></svg>
<div style="left:648px;top:61px;width:1px;height:22px;background:#c6c6c6;"></div>
<svg style="left:655px;top:64px" width="16" height="16" viewBox="0 0 16 16"><path d="M1 2.2 Q4.5 -.6 8 2.2 V9 Q4.5 11.6 1 9Z" fill="#e6e6e6" stroke="#c2c2c2" stroke-width=".8"/><rect x="5.5" y="5.5" width="10" height="9.5" fill="#efefef" stroke="#c2c2c2"/><rect x="6" y="6" width="9" height="2" fill="#d4d4d4"/><path d="M7.5 10.5 H9.5 M11 10.5 H14 M7.5 12.8 H9.5 M11 12.8 H14" stroke="#c2c2c2"/><path d="M2.5 9.5 H6.5 V7.8 L9.6 10.6 L6.5 13.4 V11.7 H2.5Z" fill="#d0d0d0" stroke="#c2c2c2" stroke-width=".5"/></svg>
<svg style="left:681px;top:76px" width="5" height="3" viewBox="0 0 5 3"><g fill="#000" shape-rendering="crispEdges"><rect width="5" height="1"/><rect x="1" y="1" width="3" height="1"/><rect x="2" y="2" width="1" height="1"/></g></svg>
<div style="left:696px;top:64px;width:3px;height:18px;background:repeating-linear-gradient(180deg,#b4b4b4 0 1px,transparent 1px 2px);"></div>
<svg style="left:705px;top:64px" width="17" height="16" viewBox="0 0 17 16"><path d="M1.5 2.2 L10.8 .8 V13.6 L1.5 15.2Z" fill="#2f74d0" stroke="#1b4f9c"/><path d="M3.2 3.8 L9.4 2.8 V12 L3.2 13Z" fill="#dbe8fa"/><path d="M4.4 8.4 L5.8 10.6 L8.4 5.8" fill="none" stroke="#e0a820" stroke-width="1.5"/><path d="M10.6 8.6 L14.6 5.2 L15.8 6.4 L11.8 9.8Z" fill="#7aa6e8" stroke="#3f66a8" stroke-width=".6"/><path d="M14.6 5.2 L15.2 4.6 L16.4 5.8 L15.8 6.4Z" fill="#e58a3a"/></svg>
<svg style="left:730px;top:76px" width="5" height="3" viewBox="0 0 5 3"><g fill="#000" shape-rendering="crispEdges"><rect width="5" height="1"/><rect x="1" y="1" width="3" height="1"/><rect x="2" y="2" width="1" height="1"/></g></svg>
<div style="left:6px;top:90px;width:3px;height:19px;background:repeating-linear-gradient(180deg,#b4b4b4 0 1px,transparent 1px 2px);"></div>
<span id="t94" class="t" style="left:15px;top:89px;font-size:11.6px;color:#000;letter-spacing:0.006px;">Контекст редактирования:</span>
<svg style="left:165px;top:92px" width="15" height="14" viewBox="0 0 16 15.5"><rect x=".5" y=".5" width="15" height="14" fill="#f7f9fd" stroke="#6d8fc8"/><rect x="1" y="1" width="14" height="2.4" fill="#a9c0ea"/><rect x="2.5" y="5.2" width="11" height="2.6" fill="#7fd7ef" stroke="#6d8fc8" stroke-width=".5"/><rect x="2.5" y="9.6" width="11" height="2.6" fill="#f4e06a" stroke="#b8a83a" stroke-width=".5"/><path d="M6 5.2 V7.8 M10 5.2 V7.8 M6 9.6 V12.2 M10 9.6 V12.2" stroke="#fff" stroke-width=".8"/></svg>
<span id="t95" class="t" style="left:199.5px;top:89px;font-size:11.6px;color:#000;letter-spacing:0.186px;">Контекст редактирования не выбран</span>
<svg style="left:418px;top:98px" width="5" height="3" viewBox="0 0 5 3"><g fill="#000" shape-rendering="crispEdges"><rect width="5" height="1"/><rect x="1" y="1" width="3" height="1"/><rect x="2" y="2" width="1" height="1"/></g></svg>
<svg style="left:431px;top:92px" width="15" height="14" viewBox="0 0 16 15.5"><rect x=".5" y=".5" width="15" height="14" fill="#f3f3f3" stroke="#c2c2c2"/><rect x="1" y="1" width="14" height="2.6" fill="#d0d0d0"/><rect x="2.5" y="5.2" width="11" height="2.6" fill="#d9d9d9"/><rect x="2.5" y="9.6" width="11" height="2.6" fill="#e2e2e2"/></svg>
<svg style="left:453px;top:92px" width="16" height="15" viewBox="0 0 16 16"><rect x=".5" y=".5" width="15" height="14" fill="#f3f3f3" stroke="#c2c2c2"/><rect x="1" y="1" width="14" height="2.6" fill="#d0d0d0"/><rect x="2.5" y="5.2" width="11" height="2.6" fill="#d9d9d9"/><rect x="2.5" y="9.6" width="11" height="2.6" fill="#e2e2e2"/><path d="M.6 11.4 H7.4 V15.6 H.6Z" fill="#d6d6d6" stroke="#c2c2c2" stroke-width=".6"/><circle cx="5.6" cy="13.8" r="1.8" fill="#c6c6c6"/></svg>
<svg style="left:476px;top:98px" width="5" height="3" viewBox="0 0 5 3"><g fill="#a0a0a0" shape-rendering="crispEdges"><rect width="5" height="1"/><rect x="1" y="1" width="3" height="1"/><rect x="2" y="2" width="1" height="1"/></g></svg>
<div style="left:487px;top:88px;width:1px;height:21px;background:#c6c6c6;"></div>
<svg style="left:493px;top:91px" width="16" height="16" viewBox="0 0 16 16"><rect x="1.5" y=".5" width="14" height="12.5" fill="#f7f9fd" stroke="#3f66c8"/><rect x="2" y="1" width="13" height="2.6" fill="#3a6fd0"/><rect x="4" y="5.2" width="9.5" height="2.2" fill="#58c8ee"/><rect x="4" y="8.8" width="9.5" height="2.2" fill="#f0dc50"/><path d="M7 5.2 V7.4 M10.4 5.2 V7.4 M7 8.8 V11 M10.4 8.8 V11" stroke="#fff" stroke-width=".8"/><circle cx="3.6" cy="9.4" r="3" fill="#dff1fb" stroke="#6d8fb8"/><path d="M5.8 11.6 L8.6 14.6" stroke="#e0862a" stroke-width="1.8" stroke-linecap="round"/><path d="M8 13.4 L9.4 15.4" stroke="#d23b3b" stroke-width="1.4"/></svg>
<svg style="left:517px;top:91px" width="16" height="16" viewBox="0 0 16 16"><rect x="1.5" y=".5" width="14" height="12.5" fill="#f7f9fd" stroke="#3f66c8"/><rect x="2" y="1" width="13" height="2.6" fill="#3a6fd0"/><rect x="4" y="5.2" width="9.5" height="2.2" fill="#58c8ee"/><rect x="4" y="8.8" width="9.5" height="2.2" fill="#f0dc50"/><path d="M7 5.2 V7.4 M10.4 5.2 V7.4 M7 8.8 V11 M10.4 8.8 V11" stroke="#fff" stroke-width=".8"/><path d="M4 8.6 V15.4 M.6 12 H7.4" stroke="#2c8a2c" stroke-width="3.2"/><path d="M4 9.4 V14.6 M1.4 12 H6.6" stroke="#7fd85f" stroke-width="1.5"/></svg>
<svg style="left:538px;top:104px" width="5" height="3" viewBox="0 0 5 3"><g fill="#000" shape-rendering="crispEdges"><rect width="5" height="1"/><rect x="1" y="1" width="3" height="1"/><rect x="2" y="2" width="1" height="1"/></g></svg>
<div style="left:551px;top:90px;width:3px;height:19px;background:repeating-linear-gradient(180deg,#b4b4b4 0 1px,transparent 1px 2px);"></div>
<span id="t96" class="t" style="left:560.5px;top:89px;font-size:11.6px;color:#000;letter-spacing:0.225px;">Проект:</span>
<svg style="left:611px;top:91px" width="16" height="16" viewBox="0 0 16 16"><path d="M.8 5.4 L5.4 2 L15.4 3.4 L15.4 10.6 L10.6 14.6 L.8 12.6Z" fill="#e9c4a6" stroke="#b98f72" stroke-width=".7"/><path d="M.8 5.4 L10.6 7.2 L15.4 3.4 M10.6 7.2 V14.6" fill="none" stroke="#b98f72" stroke-width=".7"/><path d="M10.6 7.2 L15.4 3.4 V10.6 L10.6 14.6Z" fill="#d7a988"/><path d="M.8 5.4 L5.4 2 L15.4 3.4 L10.6 7.2Z" fill="#f3d9c2"/><path d="M1.4 9.6 L10 11.4" stroke="#8fc8e8" stroke-width="1.4"/><path d="M3 4.8 L8 5.6 L7.6 8.2 L2.8 7.4Z" fill="#f7e7d8" stroke="#d9a682" stroke-width=".5"/></svg>
<span id="t97" class="t" style="left:646.5px;top:89px;font-size:11.6px;color:#000;letter-spacing:0.252px;">Текущий проект не выбран</span>
<svg style="left:811px;top:98px" width="5" height="3" viewBox="0 0 5 3"><g fill="#000" shape-rendering="crispEdges"><rect width="5" height="1"/><rect x="1" y="1" width="3" height="1"/><rect x="2" y="2" width="1" height="1"/></g></svg>
<div style="left:823px;top:88px;width:1px;height:21px;background:#c6c6c6;"></div>
<svg style="left:831px;top:91px" width="16" height="16" viewBox="0 0 16 16"><path d="M1.5 5.5 L3.5 2.5 L6 4 L7 1 H12.5 V14.5 H2.5Z" fill="#e9e9e9" stroke="#c2c2c2"/><path d="M6 9.5 H11.5 V14.5 H6Z M8.5 7.5 V9.5 M7 12 H10.5" fill="#d6d6d6" stroke="#c2c2c2" stroke-width=".8"/></svg>
<svg style="left:852px;top:98px" width="5" height="3" viewBox="0 0 5 3"><g fill="#a0a0a0" shape-rendering="crispEdges"><rect width="5" height="1"/><rect x="1" y="1" width="3" height="1"/><rect x="2" y="2" width="1" height="1"/></g></svg>
<svg style="left:868px;top:104px" width="5" height="3" viewBox="0 0 5 3"><g fill="#000" shape-rendering="crispEdges"><rect width="5" height="1"/><rect x="1" y="1" width="3" height="1"/><rect x="2" y="2" width="1" height="1"/></g></svg>
<div style="left:882px;top:90px;width:3px;height:19px;background:repeating-linear-gradient(180deg,#b4b4b4 0 1px,transparent 1px 2px);"></div>
<span id="t98" class="t" style="left:889.5px;top:89px;font-size:11.6px;color:#000;letter-spacing:-0.055px;">Правило:</span>
<div style="left:943px;top:89px;width:300px;height:19px;background:#fff;"></div>
<div style="left:944px;top:90px;width:280px;height:17px;background:#e1e1e1;"></div>
<div style="left:1230px;top:90px;width:12px;height:17px;background:#f0f0f0;"></div>
<span id="t99" class="t" style="left:945.5px;top:89px;font-size:11.6px;color:#000;letter-spacing:-0.265px;">Подбор базовых версий</span>
<svg style="left:1234px;top:97px" width="5" height="3" viewBox="0 0 5 3"><g fill="#000" shape-rendering="crispEdges"><rect width="5" height="1"/><rect x="1" y="1" width="3" height="1"/><rect x="2" y="2" width="1" height="1"/></g></svg>
<svg style="left:1249px;top:90px" width="16" height="16" viewBox="0 0 16 16"><path d="M3.5 0.5 H9.5 L13.5 4.5 V14.5 H3.5Z" fill="#ececec" stroke="#c2c2c2"/><path d="M9.5 0.5 V4.5 H13.5" fill="#fff" stroke="#c2c2c2" stroke-width=".8"/><path d="M.8 6.4 H5 V4.2 L9.4 8 L5 11.8 V9.6 H.8Z" fill="#e2e2e2" stroke="#c2c2c2" stroke-width=".7"/></svg>
<svg style="left:1272px;top:90px" width="17" height="16" viewBox="0 0 17 16"><path d="M5 8.4 L11.4 4 M5 8.4 L11.4 12.6" stroke="#222" stroke-width="1"/><path d="M3.6 4.999999999999999 L6.800000000000001 6.4399999999999995 L3.6 8.2 L0.3999999999999999 6.4399999999999995Z" fill="#8fc0f2" stroke="#1c4f96" stroke-width=".4"/><path d="M0.3999999999999999 6.4399999999999995 L3.6 8.2 V11.399999999999999 L0.3999999999999999 9.959999999999999Z" fill="#3f86dc" stroke="#1c4f96" stroke-width=".4"/><path d="M6.800000000000001 6.4399999999999995 L3.6 8.2 V11.399999999999999 L6.800000000000001 9.959999999999999Z" fill="#2363b8" stroke="#1c4f96" stroke-width=".4"/><path d="M12.4 0.5999999999999996 L15.600000000000001 2.0399999999999996 L12.4 3.8 L9.2 2.0399999999999996Z" fill="#f58a8a" stroke="#8e1414" stroke-width=".4"/><path d="M9.2 2.0399999999999996 L12.4 3.8 V7.0 L9.2 5.5600000000000005Z" fill="#e03636" stroke="#8e1414" stroke-width=".4"/><path d="M15.600000000000001 2.0399999999999996 L12.4 3.8 V7.0 L15.600000000000001 5.5600000000000005Z" fill="#b81c1c" stroke="#8e1414" stroke-width=".4"/><path d="M12.4 9.0 L15.600000000000001 10.44 L12.4 12.2 L9.2 10.44Z" fill="#f8dc8a" stroke="#8e6412" stroke-width=".4"/><path d="M9.2 10.44 L12.4 12.2 V15.399999999999999 L9.2 13.959999999999999Z" fill="#e8b43a" stroke="#8e6412" stroke-width=".4"/><path d="M15.600000000000001 10.44 L12.4 12.2 V15.399999999999999 L15.600000000000001 13.959999999999999Z" fill="#c08a1c" stroke="#8e6412" stroke-width=".4"/></svg>
<div style="left:1295px;top:88px;width:1px;height:21px;background:#c6c6c6;"></div>
<svg style="left:1302px;top:91px" width="18" height="16" viewBox="0 0 18 16"><path d="M3 10.5 L9 6.5 L14 2.5 M3 10.5 L9 6.5 H14 M3 10.5 H14 M3 10.5 L9 14.5" stroke="#111" stroke-width=".8" fill="none"/><rect x="0" y="9" width="4.2" height="3" fill="#1f78e0"/><rect x="14" y="1.4" width="2.3" height="2.3" fill="#fff" stroke="#c01818" stroke-width="1"/><rect x="14" y="5.4" width="2.3" height="2.3" fill="#fff" stroke="#c01818" stroke-width="1"/><rect x="14" y="9.4" width="2.3" height="2.3" fill="#fff" stroke="#c01818" stroke-width="1"/><rect x="7.4" y="5" width="3.6" height="3" fill="#1038c8"/><rect x="7.4" y="9" width="3.6" height="3" fill="#1038c8"/><rect x="7.4" y="13" width="3.6" height="3" fill="#1f78e0"/></svg>
<svg style="left:1325px;top:91px" width="18" height="16" viewBox="0 0 18 16"><path d="M3 10.5 L9 6.5 L14 2.5 M3 10.5 L9 6.5 H14 M3 10.5 H14 M3 10.5 L9 14.5" stroke="#111" stroke-width=".8" fill="none"/><rect x="0" y="9" width="4.2" height="3" fill="#1f78e0"/><rect x="14" y="1.4" width="2.3" height="2.3" fill="#fff" stroke="#c01818" stroke-width="1"/><rect x="14" y="5.4" width="2.3" height="2.3" fill="#fff" stroke="#c01818" stroke-width="1"/><rect x="14" y="9.4" width="2.3" height="2.3" fill="#fff" stroke="#c01818" stroke-width="1"/><rect x="8" y="5.4" width="2.3" height="2.3" fill="#fff" stroke="#c01818" stroke-width="1"/><rect x="8" y="9.4" width="2.3" height="2.3" fill="#fff" stroke="#c01818" stroke-width="1"/><rect x="7.4" y="13" width="3.6" height="3" fill="#1f78e0"/></svg>
<div style="left:1348px;top:88px;width:1px;height:21px;background:#c6c6c6;"></div>
<svg style="left:1356px;top:90px" width="16" height="16" viewBox="0 0 16 16"><rect x=".8" y="4" width="2.4" height="8" rx="1" fill="#dbe8fb" stroke="#1c5fc0" stroke-width="1.2"/><rect x="4" y=".8" width="3" height="14.4" rx="1.2" fill="#dbe8fb" stroke="#1c5fc0" stroke-width="1.3"/><rect x="8" y=".8" width="3" height="14.4" rx="1.2" fill="#f4d8f4" stroke="#9a2fa8" stroke-width="1.3"/><rect x="11.4" y="4.6" width="3.8" height="6.8" rx="1" fill="#f4d8f4" stroke="#9a2fa8" stroke-width="1.2"/><path d="M11.4 8 H15" stroke="#9a2fa8" stroke-width="1"/></svg>
<div style="left:1378px;top:88px;width:1px;height:21px;background:#c6c6c6;"></div>
<svg style="left:1385px;top:90px" width="17" height="16" viewBox="0 0 17 16"><path d="M.6 .8 H11.4 L7.4 6 V13.4 L4.6 11.4 V6Z" fill="#9cc0ea" stroke="#2f5fa8"/><path d="M2 1.6 H10" stroke="#e8f2fc" stroke-width="1"/><path d="M12 6.5 L15.9 8.255 L12 10.4 L8.1 8.255Z" fill="#f58a8a" stroke="#8e1414" stroke-width=".4"/><path d="M8.1 8.255 L12 10.4 V14.3 L8.1 12.545Z" fill="#e03636" stroke="#8e1414" stroke-width=".4"/><path d="M15.9 8.255 L12 10.4 V14.3 L15.9 12.545Z" fill="#b81c1c" stroke="#8e1414" stroke-width=".4"/><path d="M10.4 11.6 v1 M13.4 11 v1 M12 7.6 h.8" stroke="#5a0a0a" stroke-width=".8"/></svg>
<div style="left:1408px;top:88px;width:1px;height:21px;background:#c6c6c6;"></div>
<div style="left:1412px;top:88px;width:23px;height:22px;background:#e0effc;box-sizing:border-box;border:1px solid #3c96f0"></div>
<svg style="left:1415px;top:91px" width="17" height="16" viewBox="0 0 17 16"><path d="M5 1.8000000000000003 L8.6 3.42 L5 5.4 L1.4 3.42Z" fill="#8fc0f2" stroke="#1c4f96" stroke-width=".4"/><path d="M1.4 3.42 L5 5.4 V9.0 L1.4 7.380000000000001Z" fill="#3f86dc" stroke="#1c4f96" stroke-width=".4"/><path d="M8.6 3.42 L5 5.4 V9.0 L8.6 7.380000000000001Z" fill="#2363b8" stroke="#1c4f96" stroke-width=".4"/><path d="M12 0.8000000000000007 L16.6 2.8700000000000006 L12 5.4 L7.4 2.8700000000000006Z" fill="#8fe8a8" stroke="#126a2c" stroke-width=".4"/><path d="M7.4 2.8700000000000006 L12 5.4 V10.0 L7.4 7.93Z" fill="#2fb85a" stroke="#126a2c" stroke-width=".4"/><path d="M16.6 2.8700000000000006 L12 5.4 V10.0 L16.6 7.93Z" fill="#1c8a3e" stroke="#126a2c" stroke-width=".4"/><path d="M6.6 8.399999999999999 L10.399999999999999 10.11 L6.6 12.2 L2.8 10.11Z" fill="#f58a8a" stroke="#8e1414" stroke-width=".4"/><path d="M2.8 10.11 L6.6 12.2 V16.0 L2.8 14.29Z" fill="#e03636" stroke="#8e1414" stroke-width=".4"/><path d="M10.399999999999999 10.11 L6.6 12.2 V16.0 L10.399999999999999 14.29Z" fill="#b81c1c" stroke="#8e1414" stroke-width=".4"/><path d="M11 6.4 v1.6 M13.6 5.4 v1.6 M5.6 13 v1 M8 12.6 v1" stroke="#0a3a1a" stroke-width=".8"/></svg>
<svg style="left:1443px;top:104px" width="5" height="3" viewBox="0 0 5 3"><g fill="#000" shape-rendering="crispEdges"><rect width="5" height="1"/><rect x="1" y="1" width="3" height="1"/><rect x="2" y="2" width="1" height="1"/></g></svg>
<span id="t100" class="t" style="left:12.5px;top:115px;font-size:11.6px;color:#66717e;letter-spacing:0.144px;">Навигатор</span>
<div style="left:90px;top:119px;width:1px;height:14px;background:#808080;"></div>
<span id="t101" class="t" style="left:99.5px;top:115px;font-size:11.6px;color:#66717e;letter-spacing:-0.111px;">Конфигуратор базы данных</span>
<div style="left:268px;top:119px;width:1px;height:14px;background:#808080;"></div>
<span id="t102" class="t" style="left:277.5px;top:115px;font-size:11.6px;color:#66717e;letter-spacing:-0.113px;">Редактор шаблонов процессов</span>
<div style="left:463px;top:114px;width:234px;height:21px;background:#f0f0f0;"></div>
<svg style="left:467px;top:118px" width="15" height="15" viewBox="0 0 15 15"><rect x=".5" y="1.5" width="14" height="12" fill="#fff" stroke="#2f4f8a"/><rect x="1" y="2" width="13" height="2.6" fill="#3a66c0"/><path d="M.5 7.5 H14.5 M.5 10.5 H14.5 M4.5 4.5 V13.5 M8 4.5 V13.5 M11.5 4.5 V13.5" stroke="#7a8aa8" stroke-width=".8"/></svg>
<span id="t103" class="t" style="left:489.5px;top:115px;font-size:11.6px;color:#000;font-weight:bold;letter-spacing:0.368px;">IM1000.11.300 (Ролик в сборе)</span>
<svg style="left:683px;top:121px" width="10" height="10" viewBox="0 0 10 10"><path d="M1.2 1.2 L8.8 8.8 M8.8 1.2 L1.2 8.8" stroke="#555" stroke-width="2" fill="none"/></svg>
<div style="left:697px;top:117px;width:1px;height:18px;background:#000;"></div>
<svg style="left:1445px;top:120px" width="8" height="7" viewBox="0 0 8 7"><path d="M0 .5 H8" stroke="#555" stroke-width="1"/><path d="M0 2.5 H8 L4 6.5Z" fill="#555"/></svg>
<div style="left:1px;top:135px;width:1458px;height:28px;background:#f0f0f0;"></div>
<div style="left:4px;top:137px;width:803px;height:25px;background:#f5f5f5;border-radius:3px"></div>
<div style="left:808px;top:137px;width:156px;height:25px;background:#f5f5f5;border-radius:3px"></div>
<div style="left:965px;top:137px;width:489px;height:25px;background:#f5f5f5;border-radius:3px"></div>
<div style="left:9px;top:142px;width:3px;height:17px;background:repeating-linear-gradient(180deg,#b4b4b4 0 1px,transparent 1px 2px);"></div>
<svg style="left:18px;top:142px" width="16" height="16" viewBox="0 0 16 16"><text x="-.4" y="14.6" font-family="Liberation Serif" font-weight="bold" font-size="14" fill="#4a66b8">a</text><text x="5.6" y="12" font-family="Liberation Serif" font-size="15.5" fill="#4a86d8" textLength="9" lengthAdjust="spacingAndGlyphs">A</text></svg>
<div style="left:39px;top:140px;width:148px;height:19px;background:#fff;"></div>
<div style="left:174px;top:141px;width:12px;height:17px;background:#f0f0f0;"></div>
<span id="t104" class="t" style="left:45px;top:139px;font-size:11.6px;color:#000;letter-spacing:0.159px;">Arial</span>
<svg style="left:178px;top:148px" width="5" height="3" viewBox="0 0 5 3"><g fill="#000" shape-rendering="crispEdges"><rect width="5" height="1"/><rect x="1" y="1" width="3" height="1"/><rect x="2" y="2" width="1" height="1"/></g></svg>
<div style="left:192px;top:140px;width:63px;height:19px;background:#fff;"></div>
<div style="left:242px;top:141px;width:12px;height:17px;background:#f0f0f0;"></div>
<span id="t105" class="t" style="left:194px;top:139px;font-size:11.6px;color:#000;letter-spacing:-0.203px;">10</span>
<svg style="left:246px;top:148px" width="5" height="3" viewBox="0 0 5 3"><g fill="#000" shape-rendering="crispEdges"><rect width="5" height="1"/><rect x="1" y="1" width="3" height="1"/><rect x="2" y="2" width="1" height="1"/></g></svg>
<div style="left:262px;top:139px;width:1px;height:21px;background:#c6c6c6;"></div>
<svg style="left:269px;top:142px" width="16" height="16" viewBox="0 0 16 16"><text x="1.4" y="12.4" font-family="Liberation Serif" font-weight="bold" font-size="14.5" fill="#5b7fa6" >T</text></svg>
<svg style="left:292px;top:142px" width="16" height="16" viewBox="0 0 16 16"><text x="2.6" y="12.4" font-family="Liberation Serif" font-style="italic" font-weight="bold" font-size="14" fill="#5b7fa6">T</text></svg>
<svg style="left:315px;top:142px" width="16" height="16" viewBox="0 0 16 16"><text x="2.8" y="11.4" font-family="Liberation Serif" font-size="14" fill="#5b7fa6">T</text><path d="M2 13.6 H12.4" stroke="#5b7fa6" stroke-width="1"/></svg>
<div style="left:337px;top:139px;width:1px;height:21px;background:#c6c6c6;"></div>
<svg style="left:345px;top:142px" width="16" height="16" viewBox="0 0 16 16"><text x=".4" y="11.4" font-family="Liberation Serif" font-weight="bold" font-size="13" fill="#8c8c8c">T</text><text x="8.6" y="15.6" font-family="Liberation Sans" font-weight="bold" font-size="8" fill="#3a8ad8">2</text></svg>
<svg style="left:368px;top:142px" width="16" height="16" viewBox="0 0 16 16"><text x=".4" y="12.6" font-family="Liberation Serif" font-weight="bold" font-size="13" fill="#8c8c8c">T</text><text x="9.8" y="7" font-family="Liberation Sans" font-weight="bold" font-size="8" fill="#3a8ad8">2</text></svg>
<div style="left:390px;top:139px;width:1px;height:21px;background:#c6c6c6;"></div>
<svg style="left:398px;top:142px" width="16" height="16" viewBox="0 0 16 16"><text x="0.2" y="12.4" font-family="Liberation Serif" font-weight="bold" font-size="14.5" fill="#5b7fa6" >T</text><text x="9.6" y="12.4" font-family="Liberation Serif" font-weight="bold" font-size="10.5" fill="#8c8c8c" >T</text></svg>
<svg style="left:418px;top:149px" width="5" height="3" viewBox="0 0 5 3"><g fill="#000" shape-rendering="crispEdges"><rect width="5" height="1"/><rect x="1" y="1" width="3" height="1"/><rect x="2" y="2" width="1" height="1"/></g></svg>
<div style="left:431px;top:139px;width:1px;height:21px;background:#c6c6c6;"></div>
<svg style="left:438px;top:142px" width="16" height="16" viewBox="0 0 16 16"><path d="M1 2.5 H15" stroke="#3c3c3c" stroke-width="1.1"/><path d="M1 5 H11" stroke="#3c3c3c" stroke-width="1.1"/><path d="M1 7.5 H15" stroke="#3c3c3c" stroke-width="1.1"/><path d="M1 10 H11" stroke="#3c3c3c" stroke-width="1.1"/><path d="M1 12.5 H13" stroke="#3c3c3c" stroke-width="1.1"/><path d="M0.5 .5 V15.5" stroke="#5b9be0" stroke-width="1"/></svg>
<div style="left:458px;top:139px;width:23px;height:23px;background:#e0effc;box-sizing:border-box;border:1px solid #3c96f0"></div>
<svg style="left:461px;top:142px" width="16" height="16" viewBox="0 0 16 16"><path d="M1 2.5 H15" stroke="#3c3c3c" stroke-width="1.1"/><path d="M3 5 H13" stroke="#3c3c3c" stroke-width="1.1"/><path d="M1 7.5 H15" stroke="#3c3c3c" stroke-width="1.1"/><path d="M3 10 H13" stroke="#3c3c3c" stroke-width="1.1"/><path d="M2 12.5 H14" stroke="#3c3c3c" stroke-width="1.1"/><path d="M8 .5 V15.5" stroke="#5b9be0" stroke-width="1"/></svg>
<svg style="left:483px;top:142px" width="16" height="16" viewBox="0 0 16 16"><path d="M1 2.5 H15" stroke="#3c3c3c" stroke-width="1.1"/><path d="M5 5 H15" stroke="#3c3c3c" stroke-width="1.1"/><path d="M1 7.5 H15" stroke="#3c3c3c" stroke-width="1.1"/><path d="M5 10 H15" stroke="#3c3c3c" stroke-width="1.1"/><path d="M3 12.5 H15" stroke="#3c3c3c" stroke-width="1.1"/><path d="M15.5 .5 V15.5" stroke="#5b9be0" stroke-width="1"/></svg>
<svg style="left:507px;top:142px" width="16" height="16" viewBox="0 0 16 16"><path d="M1 2.5 H15" stroke="#3c3c3c" stroke-width="1.1"/><path d="M1 5 H15" stroke="#3c3c3c" stroke-width="1.1"/><path d="M1 7.5 H15" stroke="#3c3c3c" stroke-width="1.1"/><path d="M1 10 H15" stroke="#3c3c3c" stroke-width="1.1"/><path d="M1 12.5 H15" stroke="#3c3c3c" stroke-width="1.1"/><path d="M0.5 .5 V15.5" stroke="#5b9be0" stroke-width="1"/><path d="M15.5 .5 V15.5" stroke="#5b9be0" stroke-width="1"/></svg>
<svg style="left:531px;top:142px" width="16" height="16" viewBox="0 0 16 16"><rect x=".5" y="1.5" width="14" height="13" fill="#f8fafd" stroke="#7a9ac8"/><path d="M2.5 4.5 H10.5 M2.5 7 H8" stroke="#4a6ea8" stroke-width="1.1"/></svg>
<svg style="left:552px;top:149px" width="5" height="3" viewBox="0 0 5 3"><g fill="#000" shape-rendering="crispEdges"><rect width="5" height="1"/><rect x="1" y="1" width="3" height="1"/><rect x="2" y="2" width="1" height="1"/></g></svg>
<svg style="left:565px;top:142px" width="16" height="16" viewBox="0 0 16 16"><text x="6.6" y="5.8" font-family="Liberation Sans" font-size="9" fill="#222">a</text><text x="6.8" y="14.6" font-family="Liberation Sans" font-size="9" fill="#222">c</text><path d="M0 6.5 H14 M0 15.5 H14" stroke="#5b9be0" stroke-width="1"/><path d="M3 7.6 V14.4 M1.6 9 L3 7.4 L4.4 9 M1.6 13 L3 14.6 L4.4 13" stroke="#3f66a8" stroke-width=".9" fill="none"/></svg>
<svg style="left:586px;top:149px" width="5" height="3" viewBox="0 0 5 3"><g fill="#000" shape-rendering="crispEdges"><rect width="5" height="1"/><rect x="1" y="1" width="3" height="1"/><rect x="2" y="2" width="1" height="1"/></g></svg>
<div style="left:598px;top:139px;width:1px;height:21px;background:#c6c6c6;"></div>
<svg style="left:605px;top:142px" width="17" height="16" viewBox="0 0 17 16"><path d="M.5 1.5 H16 M.5 4 H13 M.5 12 H16 M.5 14.5 H13" stroke="#8a8a8a" stroke-width="1"/><path d="M.5 6.2 H16 M.5 8.2 H16 M.5 10.2 H14" stroke="#3a78d0" stroke-width="1.1"/></svg>
<svg style="left:628px;top:142px" width="17" height="16" viewBox="0 0 17 16"><text x="0" y="9" font-family="Liberation Serif" font-size="12" fill="#c2c2c2">T</text><path d="M8.5 3.5 Q12 3.5 12 8 M10.2 7 L12 9.4 L13.8 7" fill="none" stroke="#c2c2c2" stroke-width="1"/><path d="M8 13.5 H15.5 M8 11.8 V15.2 M15.5 11.8 V15.2" stroke="#c2c2c2" stroke-width="1"/></svg>
<div style="left:651px;top:139px;width:1px;height:21px;background:#c6c6c6;"></div>
<svg style="left:659px;top:142px" width="16" height="16" viewBox="0 0 16 16"><text x="0" y="5" font-family="Liberation Sans" font-weight="bold" font-size="5.6" fill="#3a6fc0">1</text><text x="0" y="10" font-family="Liberation Sans" font-weight="bold" font-size="5.6" fill="#3a6fc0">2</text><text x="0" y="15" font-family="Liberation Sans" font-weight="bold" font-size="5.6" fill="#3a6fc0">3</text><path d="M5.5 3 H15 M5.5 8 H15 M5.5 13 H15" stroke="#3c3c3c" stroke-width="1.1"/></svg>
<svg style="left:681px;top:142px" width="16" height="16" viewBox="0 0 16 16"><rect x=".5" y="1.5" width="3" height="3" fill="#6d9adc" stroke="#3a66b0" stroke-width=".6"/><rect x=".5" y="6.5" width="3" height="3" fill="#6d9adc" stroke="#3a66b0" stroke-width=".6"/><rect x=".5" y="11.5" width="3" height="3" fill="#6d9adc" stroke="#3a66b0" stroke-width=".6"/><path d="M5.5 3 H15 M5.5 8 H15 M5.5 13 H15" stroke="#3c3c3c" stroke-width="1.1"/></svg>
<svg style="left:704px;top:142px" width="17" height="16" viewBox="0 0 17 16"><path d="M5 1.5 H16 M5 13.5 H16" stroke="#3c3c3c" stroke-width="1"/><path d="M8 4.5 H16 M8 7.5 H16 M8 10.5 H14" stroke="#3c3c3c" stroke-width="1.2"/><path d="M6 0 V16" stroke="#555" stroke-width=".7" stroke-dasharray="1 1"/><path d="M8.4 7.5 H1 M3.6 4.9 L.8 7.5 L3.6 10.1" fill="none" stroke="#3a78e0" stroke-width="1.3"/></svg>
<svg style="left:727px;top:142px" width="17" height="16" viewBox="0 0 17 16"><path d="M5 1.5 H16 M5 13.5 H16" stroke="#3c3c3c" stroke-width="1"/><path d="M8 4.5 H16 M8 7.5 H16 M8 10.5 H14" stroke="#3c3c3c" stroke-width="1.2"/><path d="M6 0 V16" stroke="#555" stroke-width=".7" stroke-dasharray="1 1"/><path d="M0 7.5 H6.4 M4 4.9 L6.8 7.5 L4 10.1" fill="none" stroke="#3a78e0" stroke-width="1.3"/></svg>
<div style="left:751px;top:139px;width:1px;height:21px;background:#c6c6c6;"></div>
<svg style="left:759px;top:142px" width="16" height="17" viewBox="0 0 16 17"><path d="M6.6 2.6 L13.4 8.6 L8 13.4 L1.4 7.4Z" fill="#f4f8fd" stroke="#3a6fb8" stroke-width="1.1"/><path d="M3 7.6 L9 9.4 L12.4 8.4 L8 12.4Z" fill="#9cc0ea"/><path d="M6.6 5.4 V1.2 Q8 -.2 9 1.2 V4.6" fill="none" stroke="#3a6fb8" stroke-width="1"/><path d="M13.4 8.6 Q15.8 10.4 15 13 Q13 12 13 9.6Z" fill="#4a8ae0"/><rect x="0" y="14.2" width="15" height="3" fill="#fff"/></svg>
<svg style="left:781px;top:149px" width="5" height="3" viewBox="0 0 5 3"><g fill="#000" shape-rendering="crispEdges"><rect width="5" height="1"/><rect x="1" y="1" width="3" height="1"/><rect x="2" y="2" width="1" height="1"/></g></svg>
<svg style="left:796px;top:143px" width="9" height="7" viewBox="0 0 9 7"><path d="M.8 .8 L3.6 3.4 L.8 6 M4.8 .8 L7.6 3.4 L4.8 6" fill="none" stroke="#000" stroke-width="1.4"/></svg>
<svg style="left:798px;top:154px" width="5" height="3" viewBox="0 0 5 3"><g fill="#000" shape-rendering="crispEdges"><rect width="5" height="1"/><rect x="1" y="1" width="3" height="1"/><rect x="2" y="2" width="1" height="1"/></g></svg>
<div style="left:812px;top:142px;width:3px;height:17px;background:repeating-linear-gradient(180deg,#b4b4b4 0 1px,transparent 1px 2px);"></div>
<svg style="left:820px;top:142px" width="16" height="16" viewBox="0 0 16 16"><defs><linearGradient id="navg" x1="0" y1="0" x2="1" y2="0"><stop offset="0" stop-color="#86b0f0"/><stop offset="1" stop-color="#3a70dc"/></linearGradient></defs><rect x="1" y="1.5" width="2.8" height="13" fill="#4a80e0"/><path d="M12 1.5 V14.5 L4.4 8Z" fill="url(#navg)"/></svg>
<svg style="left:843px;top:142px" width="16" height="16" viewBox="0 0 16 16"><defs><linearGradient id="navg" x1="0" y1="0" x2="1" y2="0"><stop offset="0" stop-color="#86b0f0"/><stop offset="1" stop-color="#3a70dc"/></linearGradient></defs><path d="M11 1.5 V14.5 L3 8Z" fill="url(#navg)"/></svg>
<div style="left:863px;top:140px;width:49px;height:19px;background:#fff;"></div>
<div style="left:899px;top:141px;width:12px;height:17px;background:#f0f0f0;"></div>
<span id="t106" class="t" style="left:865px;top:139px;font-size:11.6px;color:#000;letter-spacing:1.547px;">2</span>
<svg style="left:903px;top:148px" width="5" height="3" viewBox="0 0 5 3"><g fill="#000" shape-rendering="crispEdges"><rect width="5" height="1"/><rect x="1" y="1" width="3" height="1"/><rect x="2" y="2" width="1" height="1"/></g></svg>
<svg style="left:918px;top:142px" width="16" height="16" viewBox="0 0 16 16"><defs><linearGradient id="navg" x1="0" y1="0" x2="1" y2="0"><stop offset="0" stop-color="#86b0f0"/><stop offset="1" stop-color="#3a70dc"/></linearGradient></defs><path d="M4 1.5 V14.5 L12 8Z" fill="url(#navg)"/></svg>
<svg style="left:942px;top:142px" width="16" height="16" viewBox="0 0 16 16"><defs><linearGradient id="navg" x1="0" y1="0" x2="1" y2="0"><stop offset="0" stop-color="#86b0f0"/><stop offset="1" stop-color="#3a70dc"/></linearGradient></defs><rect x="9.4" y="1.5" width="2.8" height="13" fill="#4a80e0"/><path d="M1 1.5 V14.5 L8.6 8Z" fill="url(#navg)"/></svg>
<svg style="left:955px;top:155px" width="5" height="3" viewBox="0 0 5 3"><g fill="#000" shape-rendering="crispEdges"><rect width="5" height="1"/><rect x="1" y="1" width="3" height="1"/><rect x="2" y="2" width="1" height="1"/></g></svg>
<div style="left:968px;top:142px;width:3px;height:17px;background:repeating-linear-gradient(180deg,#b4b4b4 0 1px,transparent 1px 2px);"></div>
<svg style="left:976px;top:142px" width="17" height="16" viewBox="0 0 17 16"><path d="M0.5 4.5 H6 L9.5 8 V15.5 H0.5Z" fill="#e8f0fb" stroke="#2f5fa8" stroke-width="1.2"/><path d="M2 7 H5 M2 13.6 H8" stroke="#2f5fa8" stroke-width=".9"/><rect x="1.4" y="9" width="7.2" height="3" rx=".8" fill="#e02828" stroke="#a01010" stroke-width=".5"/><path d="M2.6 10.5 H7.4" stroke="#fff" stroke-width="1"/><path d="M13.4 0 V6 M10.4 3 H16.4 M11.2 .8 L15.6 5.2 M15.6 .8 L11.2 5.2" stroke="#f0a020" stroke-width="1"/><circle cx="13.4" cy="3" r="1.3" fill="#fff3a0"/></svg>
<svg style="left:1000px;top:142px" width="17" height="16" viewBox="0 0 17 16"><path d="M0.5 5.0 H6 L9.5 8.5 V16.0 H0.5Z" fill="#e8f0fb" stroke="#2f5fa8" stroke-width="1.2"/><path d="M2 7.5 H5 M2 14.1 H8" stroke="#2f5fa8" stroke-width=".9"/><rect x="1.4" y="9.5" width="7.2" height="3" rx=".8" fill="#e02828" stroke="#a01010" stroke-width=".5"/><path d="M2.6 11.0 H7.4" stroke="#fff" stroke-width="1"/><path d="M12.2 1.3999999999999995 L16.6 3.3799999999999994 L12.2 5.8 L7.799999999999999 3.3799999999999994Z" fill="#f2d2a8" stroke="#8a5a22" stroke-width=".4"/><path d="M7.799999999999999 3.3799999999999994 L12.2 5.8 V10.2 L7.799999999999999 8.22Z" fill="#d9a25e" stroke="#8a5a22" stroke-width=".4"/><path d="M16.6 3.3799999999999994 L12.2 5.8 V10.2 L16.6 8.22Z" fill="#b97f3c" stroke="#8a5a22" stroke-width=".4"/><path d="M10 11 V14.6 H13.6 M11.4 13 L10 14.8 L8.6 13" fill="none" stroke="#2f66d0" stroke-width="1.2"/></svg>
<svg style="left:1023px;top:142px" width="16" height="16" viewBox="0 0 16 16"><path d="M.5 3.5 Q.5 1.5 2.5 1.5 H6 L7.5 3.5 H9.5 V10 H.5Z" fill="#e6e6e6" stroke="#c2c2c2" stroke-width=".8"/><rect x="3.5" y="5.5" width="12" height="10" fill="#f4f4f4" stroke="#c2c2c2"/><rect x="4" y="6" width="11" height="2" fill="#d8d8d8"/><path d="M3.5 10.5 H15.5 M3.5 13 H15.5 M7.5 8 V15.5 M11.5 8 V15.5" stroke="#c2c2c2" stroke-width=".8"/></svg>
<div style="left:1046px;top:139px;width:1px;height:21px;background:#c6c6c6;"></div>
<svg style="left:1054px;top:142px" width="16" height="16" viewBox="0 0 16 16"><rect x="1" y="1.5" width="8.5" height="6.5" fill="#eef3fb" stroke="#2f5fa8" stroke-width="1.2"/><rect x="1" y="9.5" width="9.5" height="5.8" fill="#f6ee9a" stroke="#2f5fa8" stroke-width="1.2"/><path d="M2 8.8 H10" stroke="#2f5fa8" stroke-width="1" stroke-dasharray="1.2 1.2"/><path d="M12 0 V8 M8 4 H16" stroke="#2c8a2c" stroke-width="3.4"/><path d="M12 .8 V7.2 M8.8 4 H15.2" stroke="#6fd04f" stroke-width="1.6"/></svg>
<svg style="left:1076px;top:149px" width="5" height="3" viewBox="0 0 5 3"><g fill="#000" shape-rendering="crispEdges"><rect width="5" height="1"/><rect x="1" y="1" width="3" height="1"/><rect x="2" y="2" width="1" height="1"/></g></svg>
<div style="left:1087px;top:139px;width:1px;height:21px;background:#c6c6c6;"></div>
<svg style="left:1095px;top:142px" width="16" height="16" viewBox="0 0 16 16"><rect x=".5" y="1.5" width="15" height="13.5" fill="#eaf2fd" stroke="#3a78d8" stroke-width="1.2"/><rect x="1" y="2" width="14" height="2.6" fill="#4a8ae8"/><rect x="1.2" y="8.2" width="13.6" height="2.2" fill="#b7d4f7"/><path d="M3 6.6 H5 M6.6 6.6 H9.4 M11 6.6 H13 M3 12.4 H5 M6.6 12.4 H9.4 M11 12.4 H13" stroke="#6a9ae0" stroke-width="1"/></svg>
<div style="left:1117px;top:139px;width:1px;height:21px;background:#c6c6c6;"></div>
<svg style="left:1124px;top:142px" width="16" height="16" viewBox="0 0 16 16"><rect x=".5" y="0.5" width="3" height="3" fill="#f6f6f6" stroke="#c2c2c2" stroke-width=".8"/><rect x=".5" y="6" width="3" height="3" fill="#f6f6f6" stroke="#c2c2c2" stroke-width=".8"/><rect x=".5" y="11.5" width="3" height="3" fill="#f6f6f6" stroke="#c2c2c2" stroke-width=".8"/><rect x="6.5" y="3.5" width="9" height="11.5" fill="#f2f2f2" stroke="#c2c2c2"/><path d="M6.5 6 H15.5 M9.5 3.5 V15 M12.5 3.5 V15" stroke="#c2c2c2" stroke-width=".8"/></svg>
<svg style="left:1147px;top:142px" width="16" height="16" viewBox="0 0 16 16"><rect x=".5" y="5.5" width="10" height="10" fill="#e4e4e4" stroke="#8a8a8a"/><rect x="1" y="6" width="9" height="1.6" fill="#b8c8a8"/><rect x="4.5" y=".5" width="11" height="10.5" fill="#f4f8fd" stroke="#3f66a8"/><rect x="5" y="1" width="10" height="2.2" fill="#4a7ad0"/><path d="M2.6 13.2 L11.4 4.6 M7.6 4.4 H11.6 V8.4" fill="none" stroke="#2a4a8a" stroke-width="1.1"/></svg>
<div style="left:1170px;top:139px;width:1px;height:21px;background:#c6c6c6;"></div>
<svg style="left:1177px;top:142px" width="17" height="16" viewBox="0 0 17 16"><path d="M0.5 0.5 H7.0 L10.5 4.0 V12.5 H0.5Z" fill="#b7cdea" stroke="#4a6ea8"/><path d="M7.0 0.5 V4.0 H10.5" fill="#fff" stroke="#4a6ea8" stroke-width=".8"/><path d="M6.6 14.6 L7.4 11.4 L13.6 5.2 L15.6 7.2 L9.6 13.6Z" fill="#f2c23e" stroke="#8a6a22" stroke-width=".7"/><path d="M13.6 5.2 L14.6 4.2 Q15.4 3.8 16 4.6 L16.4 5.6 L15.6 7.2Z" fill="#e58fb4" stroke="#8a4a66" stroke-width=".6"/><path d="M6.6 14.6 L7.2 12.6 L8.6 14Z" fill="#333"/></svg>
<svg style="left:1200px;top:142px" width="16" height="16" viewBox="0 0 16 16"><path d="M0.5 0.5 H7.0 L10.5 4.0 V12.5 H0.5Z" fill="#b7cdea" stroke="#4a6ea8"/><path d="M7.0 0.5 V4.0 H10.5" fill="#fff" stroke="#4a6ea8" stroke-width=".8"/><circle cx="11.6" cy="11.6" r="4.2" fill="#2fa32f" stroke="#1c7a1c" stroke-width=".8"/><path d="M9.4 11.6 L11 13.3 L14 9.8" fill="none" stroke="#fff" stroke-width="1.5"/></svg>
<div style="left:1223px;top:139px;width:1px;height:21px;background:#c6c6c6;"></div>
<svg style="left:1230px;top:142px" width="16" height="16" viewBox="0 0 16 16"><text x="0" y="7.6" font-family="Liberation Serif" font-size="9.5" fill="#2f5fc0">A</text><path d="M.8 8.6 H6.2" stroke="#2f5fc0" stroke-width=".6"/><text x=".4" y="16" font-family="Liberation Serif" font-size="9.5" fill="#b8503a">Z</text><path d="M11.5 .5 V14 M9.2 11.4 L11.5 15 L13.8 11.4Z" stroke="#222" stroke-width="1.1" fill="#222"/></svg>
<svg style="left:1253px;top:142px" width="17" height="16" viewBox="0 0 17 16"><text x="0" y="7.6" font-family="Liberation Serif" font-size="9.5" fill="#2f5fc0">A</text><path d="M.8 8.6 H6.2" stroke="#2f5fc0" stroke-width=".6"/><text x=".4" y="16" font-family="Liberation Serif" font-size="9.5" fill="#b8503a">Z</text><path d="M9 .8 H16 V8.6 H9Z M9 3.4 H16 M9 6 H16 M12.5 .8 V8.6" fill="#7aa6e0" stroke="#e8f0fb" stroke-width=".8"/><path d="M12.5 7 V13.6 M10.4 11.4 L12.5 15 L14.6 11.4Z" stroke="#222" stroke-width="1" fill="#222"/></svg>
<svg style="left:1276px;top:142px" width="16" height="16" viewBox="0 0 16 16"><path d="M8 1.4 L14.6 8.4 H10.8 V14.6 H5.2 V8.4 H1.4Z" fill="#dcdcdc" stroke="#c9c9c9" stroke-width=".8"/></svg>
<svg style="left:1298px;top:142px" width="16" height="16" viewBox="0 0 16 16"><path d="M8 14.6 L14.6 7.6 H10.8 V1.4 H5.2 V7.6 H1.4Z" fill="#dcdcdc" stroke="#c9c9c9" stroke-width=".8"/></svg>
<svg style="left:1322px;top:142px" width="16" height="16" viewBox="0 0 16 16"><text x="4" y="5.2" font-family="Liberation Sans" font-weight="bold" font-size="5.8" fill="#4a7ad0">1</text><text x="4" y="10.2" font-family="Liberation Sans" font-weight="bold" font-size="5.8" fill="#4a7ad0">2</text><text x="4" y="15.4" font-family="Liberation Sans" font-weight="bold" font-size="5.8" fill="#4a7ad0">3</text><path d="M8.5 3 H16 M8.5 8 H16 M8.5 13 H16" stroke="#5b7fc0" stroke-width="1"/><path d="M1.6 2.4 V12 M.2 10 L1.6 13 L3 10Z" stroke="#222" stroke-width="1" fill="#222"/></svg>
<svg style="left:1345px;top:142px" width="16" height="16" viewBox="0 0 16 16"><text x="0" y="5.2" font-family="Liberation Sans" font-weight="bold" font-size="5.8" fill="#4a7ad0">1</text><text x="0" y="10.2" font-family="Liberation Sans" font-weight="bold" font-size="5.8" fill="#4a7ad0">2</text><text x="0" y="15.4" font-family="Liberation Sans" font-weight="bold" font-size="5.8" fill="#4a7ad0">3</text><path d="M4 1.6 H12 M4 6.6 H12 M4 11.6 H7" stroke="#5b7fc0" stroke-width="1"/><path d="M6.4 15.2 L15.6 6.4 M7 7.6 L15 15.4" stroke="#e03a22" stroke-width="2.2" stroke-linecap="round"/></svg>
<svg style="left:1368px;top:142px" width="16" height="16" viewBox="0 0 16 16"><path d="M3.5 15.5 V6.5 L8 2.5 L12.5 6.5 V15.5Z" fill="#f4f8fd" stroke="#4a6a9a" stroke-width="1"/><text x="5" y="14.4" font-family="Liberation Sans" font-size="5.6" fill="#333">АЧ</text><path d="M1.4 5.2 L3.4 .4 L6.6 3.6 L5 4 L5.8 6 L3.6 6.8 L3 5Z" fill="#3aa83a" stroke="#1c7a1c" stroke-width=".4"/><path d="M16 2.6 L14.6 7.4 L10.8 5 L12.4 4.4 L11.4 2.6 L13.4 1.6 L14.4 3.2Z" fill="#3aa83a" stroke="#1c7a1c" stroke-width=".4"/></svg>
<svg style="left:1391px;top:142px" width="16" height="16" viewBox="0 0 16 16"><text x="0" y="11" font-family="Liberation Sans" font-weight="bold" font-size="12.5" fill="#5b86b8" textLength="10.5" lengthAdjust="spacingAndGlyphs">m</text><text x="11.4" y="5.6" font-family="Liberation Sans" font-weight="bold" font-size="6.6" fill="#3a78d0">2</text><path d="M.4 13 L3.6 9.4 L4 11.2 L6.4 10.6 L6.8 13 L4.6 13.6 L5 15.6Z" fill="#3aa83a" stroke="#1c7a1c" stroke-width=".4"/><path d="M15.6 12.6 L12 16 L11.8 14.2 L9.2 14.6 L9 12.2 L11.4 11.8 L11.2 9.8Z" fill="#3aa83a" stroke="#1c7a1c" stroke-width=".4"/></svg>
<svg style="left:1414px;top:142px" width="16" height="16" viewBox="0 0 16 16"><path d="M8 1 L15.4 14.4 H.6Z" fill="#f8d060" stroke="#e0a030" stroke-width="1.2" stroke-linejoin="round"/><path d="M8 2.8 L13.6 13.2 H2.4Z" fill="#fbe08a"/><path d="M8 5.6 V10" stroke="#4a5a8a" stroke-width="1.8"/><circle cx="8" cy="12" r="1" fill="#4a5a8a"/></svg>
<svg style="left:1445px;top:143px" width="9" height="7" viewBox="0 0 9 7"><path d="M.8 .8 L3.6 3.4 L.8 6 M4.8 .8 L7.6 3.4 L4.8 6" fill="none" stroke="#000" stroke-width="1.4"/></svg>
<svg style="left:1447px;top:154px" width="5" height="3" viewBox="0 0 5 3"><g fill="#000" shape-rendering="crispEdges"><rect width="5" height="1"/><rect x="1" y="1" width="3" height="1"/><rect x="2" y="2" width="1" height="1"/></g></svg>
</div></body></html>
